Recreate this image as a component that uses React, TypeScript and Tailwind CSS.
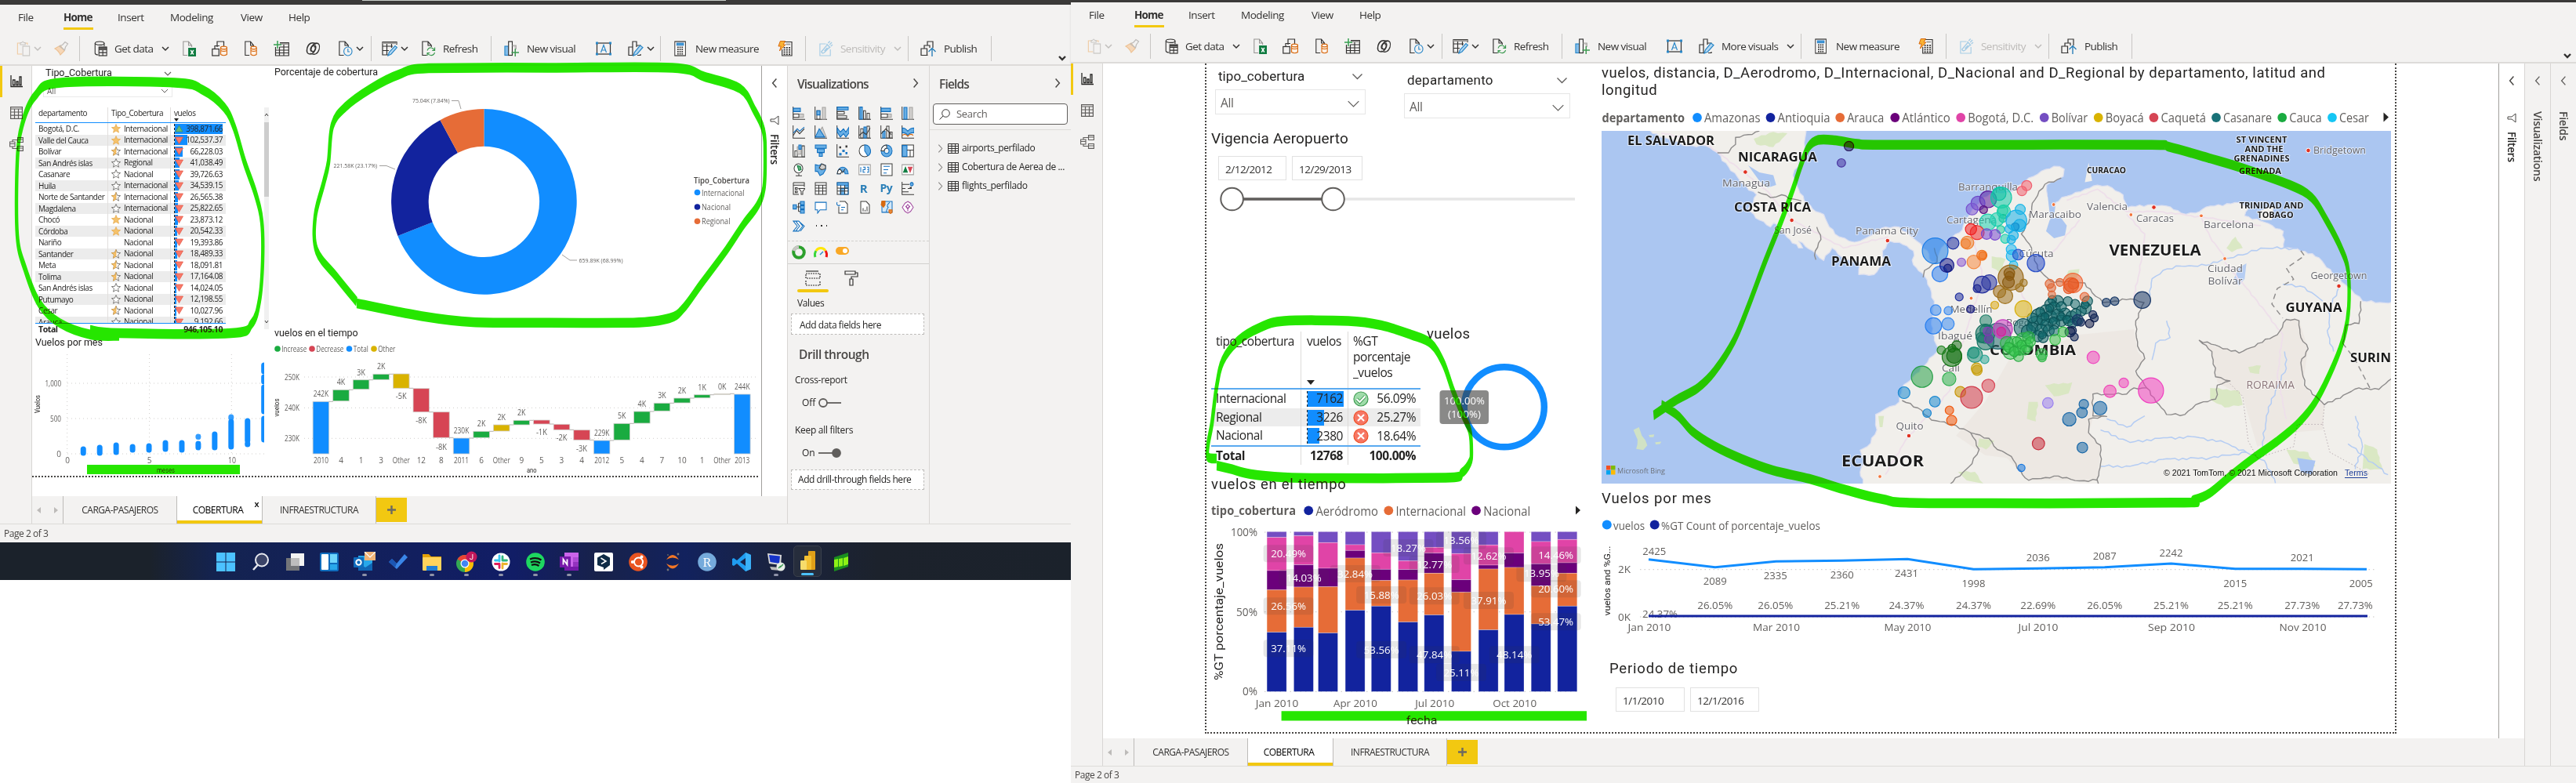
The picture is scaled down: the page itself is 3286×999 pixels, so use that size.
import React from "react";

type Pt = [number, number];
type Kids = { children?: React.ReactNode };

const BLUE = "#118dff";
const NAVY = "#12239e";
const ORANGE = "#e66c37";
const PLUM = "#6b007b";
const PINK = "#e044a7";
const PURPLE = "#744ec2";
const GOLD = "#d9b300";
const RED = "#d64554";
const TEAL = "#197278";
const GREEN = "#1aab40";
const SKY = "#15c6f4";
const SEGOE = "'Open Sans', 'Noto Sans', sans-serif";
const DIN = "Roboto, 'Open Sans', sans-serif";

/* ---------- shared drawing helpers ---------- */

function Tx(p: {
  x: number;
  y: number;
  s: number;
  t: string;
  w?: number;
  a?: "start" | "middle" | "end";
  fill?: string;
  b?: number;
  f?: string;
  r?: boolean;
  halo?: boolean;
}) {
  return (
    <text
      x={p.x}
      y={p.y + p.s * 0.355}
      fontSize={p.s}
      fontFamily={p.f ?? SEGOE}
      fontWeight={p.b ?? 400}
      fill={p.fill ?? "#605e5c"}
      textAnchor={p.a ?? "start"}
      textLength={p.w}
      lengthAdjust="spacingAndGlyphs"
      transform={p.r ? `rotate(-90 ${p.x} ${p.y})` : undefined}
      stroke={p.halo ? "#ffffff" : undefined}
      strokeOpacity={p.halo ? 0.6 : undefined}
      strokeWidth={p.halo ? 2 : undefined}
      paintOrder="stroke"
    >
      {p.t}
    </text>
  );
}

function smooth(points: Pt[], squeeze = 1): string {
  const q = points.map(([x, y]) => [x / squeeze, y] as Pt);
  let d = `M${q[0][0]} ${q[0][1]}`;
  for (let i = 0; i < q.length - 1; i++) {
    const p0 = q[i - 1] ?? q[i];
    const p1 = q[i];
    const p2 = q[i + 1];
    const p3 = q[i + 2] ?? p2;
    d += `C${p1[0] + (p2[0] - p0[0]) / 6} ${p1[1] + (p2[1] - p0[1]) / 6} ${p2[0] - (p3[0] - p1[0]) / 6} ${p2[1] - (p3[1] - p1[1]) / 6} ${p2[0]} ${p2[1]}`;
  }
  return d;
}

function Chev({ dir = "down", c = "#323130", size = 10, sw = 1.5 }: { dir?: "down" | "left" | "right"; c?: string; size?: number; sw?: number }) {
  const d = dir === "down" ? "M1 3L5 7L9 3" : dir === "left" ? "M7 0.5L3 5L7 9.5" : "M3 0.5L7 5L3 9.5";
  return (
    <svg width={size} height={size} viewBox="0 0 10 10" fill="none" stroke={c} strokeWidth={sw} className="shrink-0">
      <path d={d} />
    </svg>
  );
}

/* ---------- ribbon icons ---------- */

function Ic({ children, w = 20, h = 20 }: Kids & { w?: number; h?: number }) {
  return (
    <svg width={w} height={h} viewBox="0 0 20 20" fill="none" stroke="#323130" strokeWidth="1.2" className="block" preserveAspectRatio="none">
      {children}
    </svg>
  );
}
const PasteIcon = () => (
  <Ic w={18}>
    <path d="M6 3H1.5V17H8" stroke="#f0c9a0" />
    <path d="M12 3H15.5V5" stroke="#f0c9a0" />
    <path d="M5.5 5V2.5H7.5Q9 -0.5 10.5 2.5H12.5V5Z" stroke="#c8c6c4" />
    <rect x="9" y="7" width="9.5" height="12" stroke="#c8c6c4" />
  </Ic>
);
const BrushIcon = () => (
  <Ic>
    <path d="M2 10L9 6L14 13L9 18Q7 13 2 10Z" fill="#f6d7b8" stroke="#edc295" />
    <path d="M8 7L12 5L15 1.5L18.5 4L15.5 8L14.5 12Z" stroke="#bebbb8" />
  </Ic>
);
const DbIcon = () => (
  <Ic>
    <ellipse cx="9" cy="3.2" rx="6.5" ry="2.2" />
    <path d="M2.5 3.2V16Q3 18 7 18M15.500 3.2V7" />
    <rect x="8" y="8" width="11" height="11" />
    <path d="M8 11.500H19M8 15.200H19M13.500 11.500V19" />
    <path d="M8 9.500H19" strokeWidth="2" />
  </Ic>
);
const FileShape = ({ c = "#323130" }: { c?: string }) => <path d="M8 18.500H2V1H9.500L14 6V8M9.500 1V6H14" stroke={c} />;
const ExcelIcon = () => (
  <Ic>
    <FileShape c="#979593" />
    <rect x="9" y="9" width="11" height="11" fill="#107c41" stroke="none" />
    <path d="M12.500 12L16.500 17.500M16.500 12L12.500 17.500" stroke="#fff" strokeWidth="1.500" />
  </Ic>
);
const Cylinder = ({ x }: { x: number }) => (
  <g stroke="#d8690f" strokeWidth="1.200">
    <path d={`M${x} 9V17.500Q${x + 4} 20 ${x + 8} 17.500V9`} fill="#fdf1e6" />
    <ellipse cx={x + 4} cy="9" rx="4" ry="1.800" fill="#fdf1e6" />
    <path d={`M${x} 12.500Q${x + 4} 14.500 ${x + 8} 12.500`} />
  </g>
);
const DatasetIcon = () => (
  <Ic>
    <path d="M7 8V1H15.500V7" />
    <rect x="0.800" y="10.500" width="8.500" height="8.500" />
    <path d="M4 10V6.500H10" />
    <Cylinder x={11.500} />
  </Ic>
);
const SqlIcon = () => (
  <Ic>
    <FileShape />
    <Cylinder x={10} />
  </Ic>
);
const EnterIcon = () => (
  <Ic>
    <path d="M8 2.500H19.300V19H2.500V8M2.500 12H19.300M2.500 15.500H19.300M7.500 8V19M13 5V19M7.500 8H19.300" />
    <path d="M8 4H19" stroke="#a19f9d" strokeWidth="2" />
    <path d="M5 0V10M0 5H10" stroke="#37a050" strokeWidth="1.500" />
  </Ic>
);
const DataverseIcon = () => (
  <Ic>
    <path d="M14 4Q5 0 2 9Q0 17 6 17Q10 17 12.500 12Q15 6 11.500 6Q8 6 6.500 10Q6 14 9 13" strokeWidth="1.500" />
    <path d="M6 16Q15 20 18 11Q20 3 14 3Q10 4 8 8Q6 13 9 14Q12 14 13 10Q13 7 11 8" strokeWidth="1.300" />
  </Ic>
);
const RecentIcon = () => (
  <Ic>
    <FileShape />
    <circle cx="13.500" cy="13.500" r="5.500" stroke="#2b88c8" fill="#f3f2f1" />
    <path d="M13.500 10V14H16" stroke="#2b88c8" />
  </Ic>
);
const TransformIcon = () => (
  <Ic>
    <path d="M8 18H1V1.500H19V5M1 7H14M1 12.500H9M6.500 4V18M12.500 4V9" />
    <path d="M1 3H19" stroke="#a19f9d" strokeWidth="2.200" />
    <path d="M8 19L9.500 14.500L17 6.500L19.500 8.500L12 17Z" fill="#b5d9f3" stroke="#2b88c8" />
  </Ic>
);
const RefreshIcon = () => (
  <Ic>
    <FileShape />
    <path d="M8.500 12.500Q10 8.500 14 9Q17 9.500 18 12M18.500 8.500V12.300H15M18.500 15Q17 19 13 18.500Q10 18 9 16M8.500 19V15.500H12" stroke="#3c9a50" />
  </Ic>
);
const VisualIcon = () => (
  <Ic>
    <rect x="1" y="7" width="5" height="11.500" fill="#83beec" stroke="#2b88c8" />
    <rect x="6" y="1" width="5" height="17.500" fill="#fafafa" />
    <path d="M11 6H16V11" stroke="#a19f9d" fill="#d2d0ce" />
    <path d="M15 10V20M10 15H20" stroke="#3c9a50" strokeWidth="1.500" />
  </Ic>
);
const TextBoxIcon = () => (
  <Ic>
    <rect x="1.500" y="3" width="17" height="14" />
    <path d="M6.500 15L10 5.500L13.500 15M7.800 12H12.200" stroke="#2b88c8" />
    <path d="M0 1.500H3V4.500H0ZM17 1.500H20V4.500H17ZM0 15.500H3V18.500H0ZM17 15.500H20V18.500H17Z" fill="#2b88c8" stroke="none" />
  </Ic>
);
const MoreVisIcon = () => (
  <Ic>
    <path d="M7 18.500H1V8H6M6 18V1H11V8M11 6H16V8M16 17V18.500H12" />
    <path d="M7 19L8.500 14.500L15.500 6L19 8.500L11.500 17Z" fill="#b5d9f3" stroke="#2b88c8" />
  </Ic>
);
const Keys = ({ x, y }: { x: number; y: number }) => (
  <g fill="#323130" stroke="none">
    {[0, 1, 2, 3].map((r) => [0, 1, 2].map((c) => <rect key={`${r}${c}`} x={x + c * 3.400} y={y + r * 2.800} width="2.100" height="1.700" />))}
  </g>
);
const CalcIcon = () => (
  <Ic w={16}>
    <rect x="1" y="1" width="17" height="18" fill="#faf9f8" />
    <rect x="4" y="3" width="11" height="2.800" fill="#4aa0dc" stroke="#106ebe" strokeWidth="0.800" />
    <Keys x={5} y={7.500} />
  </Ic>
);
const QuickIcon = () => (
  <Ic>
    <path d="M9 1.500H19V19H6V11" fill="#faf9f8" />
    <rect x="11" y="3.500" width="6" height="2" fill="#a19f9d" stroke="none" />
    <Keys x={8} y={8} />
    <path d="M3.500 0.500H10L7.500 5H10.500L2.500 13L4.500 7H1Z" fill="#f9b233" stroke="#d8690f" strokeWidth="1" />
  </Ic>
);
const SensIcon = () => (
  <Ic>
    <path d="M10 4H2V19H16V11" stroke="#a6cde6" />
    <path d="M4 14L12 5L15 8L8 15Q5 17 4 14ZM8 13L12 9M11 4L16 9M13 3L15.500 0.500M15 5L18 2M16.500 7L19 5" stroke="#a6cde6" strokeWidth="1.500" />
  </Ic>
);
const PublishIcon = () => (
  <Ic>
    <path d="M5 10V6H12V9M9 6V1H16V9M9.500 18.500H1V10H8.500V18.500" />
    <path d="M15 20V9.500M10.500 14L15 9.500L19.500 14" stroke="#2b7fb8" strokeWidth="1.400" />
  </Ic>
);

function Sep({ m }: { m: string }) {
  return <div className={`h-8 w-px shrink-0 bg-[#c8c6c4] ${m}`} />;
}
function Lbl({ cls, children }: Kids & { cls: string }) {
  return <div className={`shrink-0 whitespace-nowrap text-[13.500px] tracking-[-0.550px] ${cls}`}>{children}</div>;
}
function Slot({ cls, children }: Kids & { cls: string }) {
  return <div className={`flex shrink-0 items-center ${cls}`}>{children}</div>;
}

function Ribbon({ wide }: { wide?: boolean }) {
  return (
    <header className="h-[78px] shrink-0 border-b-2 border-[#dddbd9] bg-[#f3f2f1] text-[#323130] shadow-sm">
      <nav className="flex h-8 items-center whitespace-nowrap text-[13.500px] tracking-[-0.450px]">
        <span className="ml-[23px] w-[58px]">File</span>
        <span className="flex h-8 w-[38px] items-center border-b-[3px] border-[#f2c811] pt-[3px] font-bold tracking-[-0.800px]">Home</span>
        <span className="ml-[31px] w-[67px]">Insert</span>
        <span className="w-[90px]">Modeling</span>
        <span className="w-[61px]">View</span>
        <span>Help</span>
      </nav>
      <div className="flex h-[46px] items-center pt-0.5">
        <Slot cls="ml-[21px] w-[18px]"><PasteIcon /></Slot>
        <Slot cls="ml-1 w-2.5"><Chev c="#c0bebc" /></Slot>
        <Slot cls="ml-[15px] w-5"><BrushIcon /></Slot>
        <Sep m="ml-[13px]" />
        <Slot cls="ml-[17px] w-[18px]"><DbIcon /></Slot>
        <Lbl cls="ml-[9px] w-[54px]">Get data</Lbl>
        <Slot cls="ml-1.5 w-2.5"><Chev /></Slot>
        <Slot cls="ml-4 w-[18px]"><ExcelIcon /></Slot>
        <Slot cls="ml-5 w-5"><DatasetIcon /></Slot>
        <Slot cls="ml-[21px] w-[18px]"><SqlIcon /></Slot>
        <Slot cls="ml-5 w-5"><EnterIcon /></Slot>
        <Slot cls="ml-[21px] w-[19px]"><DataverseIcon /></Slot>
        <Slot cls="ml-[22px] w-[19px]"><RecentIcon /></Slot>
        <Slot cls="ml-1 w-2.5"><Chev /></Slot>
        <Sep m="ml-[9px]" />
        <Slot cls="ml-[13px] w-5"><TransformIcon /></Slot>
        <Slot cls="ml-1 w-2.5"><Chev /></Slot>
        <Slot cls="ml-4 w-[19px]"><RefreshIcon /></Slot>
        <Lbl cls="ml-[9px] w-[46px]">Refresh</Lbl>
        <Sep m="ml-[15px]" />
        <Slot cls="ml-4 w-[19px]"><VisualIcon /></Slot>
        <Lbl cls="ml-2.5 w-[66px]">New visual</Lbl>
        <Slot cls="ml-[22px] w-5"><TextBoxIcon /></Slot>
        <Slot cls="ml-[21px] w-5"><MoreVisIcon /></Slot>
        {wide ? (
          <>
            <Lbl cls="ml-[9px] w-[78px]">More visuals</Lbl>
            <Slot cls="ml-[5px] w-2.5"><Chev /></Slot>
            <Sep m="ml-2" />
          </>
        ) : (
          <>
            <Slot cls="ml-1 w-2.5"><Chev /></Slot>
            <Sep m="ml-[7px]" />
          </>
        )}
        <Slot cls="ml-[17px] w-4"><CalcIcon /></Slot>
        <Lbl cls="ml-[11px] w-[84px]">New measure</Lbl>
        <Slot cls="ml-[21px] w-[19px]"><QuickIcon /></Slot>
        <Sep m="ml-4" />
        <Slot cls="ml-4 w-[19px]"><SensIcon /></Slot>
        <Lbl cls="ml-[9px] w-[62px] text-[#bdbbb9]">Sensitivity</Lbl>
        <Slot cls="ml-1.5 w-2.5"><Chev c="#bdbbb9" /></Slot>
        <Sep m="ml-2" />
        <Slot cls="ml-[15px] w-5"><PublishIcon /></Slot>
        <Lbl cls="ml-2.5 w-[45px]">Publish</Lbl>
        <Sep m="ml-[15px]" />
        <div className="mr-1.5 ml-auto mt-6"><Chev sw={2.400} /></div>
      </div>
    </header>
  );
}

function NavRail() {
  return (
    <aside className="flex w-[41px] shrink-0 flex-col border-r border-[#d8d6d4] bg-[#f3f2f1]">
      <div className="flex h-10 items-center border-l-[3px] border-[#f2c811] pl-[10px]">
        <svg width="16" height="16" viewBox="0 0 16 16" fill="none" stroke="#252423" strokeWidth="1.3"><path d="M1 0V14.500H16M3.500 12.500V6H6V12.500ZM8 12.500V8H10V12.500ZM12 12.500V2H14V12.500Z" /></svg>
      </div>
      <div className="flex h-10 items-center pl-[13px]">
        <svg width="16" height="16" viewBox="0 0 16 16" fill="none" stroke="#605e5c" strokeWidth="1.2"><path d="M0.600 0.600H15.400V15.400H0.600ZM0.600 3H15.400M0.600 7H15.400M0.600 11.200H15.400M5.500 3V15M10.500 3V15" /></svg>
      </div>
      <div className="flex h-10 items-center pl-[12px]">
        <svg width="18" height="18" viewBox="0 0 18 18" fill="none" stroke="#605e5c" strokeWidth="1.1"><path d="M10.500 0.600H17.400V6.500H10.500ZM10.500 3H17.400M0.600 6H7V12H0.600ZM0.600 8.500H7M10.500 11.500H17.400V17.400H10.500ZM10.500 14H17.400M4 6V3.500H10.500M4 12V14.500H10.500" /></svg>
      </div>
    </aside>
  );
}

function PageTabs({ close }: { close?: boolean }) {
  return (
    <div className="flex h-[35px] shrink-0 items-stretch bg-[#f3f2f1] text-[12px] tracking-[-0.500px] text-[#323130]">
      <div className="flex w-[39px] items-center justify-between pr-1.5 pl-1.5">
        <svg width="5" height="8" viewBox="0 0 5 8"><path d="M5 0V8L0 4Z" fill="#bdbbb9" /></svg>
        <svg width="5" height="8" viewBox="0 0 5 8"><path d="M0 0V8L5 4Z" fill="#bdbbb9" /></svg>
      </div>
      <div className="flex w-[146px] items-center justify-center border-x border-[#bdbbb9]">CARGA-PASAJEROS</div>
      <div className="relative flex w-[108px] items-center justify-center border-b-4 border-[#f2c811] bg-white pt-1 pr-1 text-black">
        COBERTURA
        {close && <span className="absolute top-0.5 right-[4px] text-[11px] font-semibold">x</span>}
      </div>
      <div className="flex w-[146px] items-center justify-center border-x border-[#bdbbb9]">INFRAESTRUCTURA</div>
      <div className="my-0.5 flex w-[39px] items-center justify-center bg-[#f2c811]">
        <svg width="11" height="11" viewBox="0 0 11 11"><path d="M5.500 0V11M0 5.500H11" stroke="#6d6a60" strokeWidth="2.4" /></svg>
      </div>
    </div>
  );
}

function StatusBar({ h }: { h: string }) {
  return <footer className={`flex shrink-0 items-center border-t border-[#dddbd9] bg-[#f3f2f1] pl-[5px] text-[12px] tracking-[-0.450px] text-[#484644] ${h}`}>Page 2 of 3</footer>;
}

/* ---------- left report ---------- */

const STAR = "M6 0.500L7.600 4.300L11.600 4.600L8.500 7.200L9.500 11.200L6 9L2.500 11.200L3.500 7.200L0.400 4.600L4.400 4.300Z";
function Star({ k }: { k: number }) {
  if (k < 0) return <svg width="12" height="12" />;
  return (
    <svg width="12" height="12" viewBox="0 0 12 12">
      {k === 2 && <path d={STAR} fill="#f5c26b" stroke="#e5a848" strokeWidth="0.7" />}
      {k < 2 && <path d={STAR} fill="#fff" stroke="#605e5c" strokeWidth="0.8" />}
      {k === 1 && <path d="M6 0.500V9L2.500 11.200L3.500 7.200L0.400 4.600L4.400 4.300Z" fill="#f5c26b" stroke="#e5a848" strokeWidth="0.7" />}
    </svg>
  );
}

const ROWS: [string, number, string, string][] = [
  ["Bogotá, D.C.", 2, "Internacional", "398,871.66"],
  ["Valle del Cauca", 2, "Internacional", "102,537.37"],
  ["Bolívar", 1, "Internacional", "66,228.03"],
  ["San Andrés islas", 0, "Regional", "41,038.49"],
  ["Casanare", 0, "Nacional", "39,726.63"],
  ["Huila", 0, "Internacional", "34,539.15"],
  ["Norte de Santander", 1, "Internacional", "26,565.38"],
  ["Magdalena", 0, "Internacional", "25,822.65"],
  ["Chocó", 2, "Nacional", "23,873.12"],
  ["Córdoba", 2, "Nacional", "20,542.33"],
  ["Nariño", -1, "Nacional", "19,393.86"],
  ["Santander", 1, "Nacional", "18,489.33"],
  ["Meta", 1, "Nacional", "18,091.81"],
  ["Tolima", 1, "Nacional", "17,164.08"],
  ["San Andrés islas", 0, "Nacional", "14,024.05"],
  ["Putumayo", 0, "Nacional", "12,198.55"],
  ["Cesar", 1, "Nacional", "10,027.96"],
  ["Arauca", 0, "Nacional", "9,192.66"],
];
const TOP_VALUE = 398871.66;

function DeptTable() {
  return (
    <div className="mt-[13px] flex h-[286px] shrink-0 justify-between">
      <div className="w-[243px] text-[10px] tracking-[-0.420px] text-[#252423]">
        <div className="flex h-5 border-b border-[#118dff]">
          <span className="w-[93px] border-r border-[#e1dfdd] pl-1">departamento</span>
          <span className="w-[80px] border-r border-[#e1dfdd] pl-1">Tipo_Cobertura</span>
          <span className="flex flex-col pl-1 leading-[14px]">
            vuelos
            <svg width="6" height="4" viewBox="0 0 6 4"><path d="M0 0H6L3 4Z" fill="#252423" /></svg>
          </span>
        </div>
        <div className="h-[255px] overflow-hidden">
          {ROWS.map((r, i) => (
            <div key={i} className={`flex h-[14.500px] items-center ${i % 2 ? "bg-[#ececec]" : "bg-white"}`}>
              <span className="h-full w-[93px] whitespace-nowrap border-r border-[#e1dfdd] pl-1 leading-[15px]">{r[0]}</span>
              <span className="flex h-full w-[80px] items-center gap-1 border-r border-[#e1dfdd] pl-1 leading-[15px]">
                <Star k={r[1]} />
                {r[2]}
              </span>
              <span className="relative ml-1 flex h-[13px] w-[62px] items-center border-l border-dashed border-[#252423]">
                <span className="absolute inset-y-0 left-0 bg-[#118dff]" style={{ width: Math.max(2, (parseFloat(r[3].replace(",", "")) / TOP_VALUE) * 61) }} />
                <svg width="11" height="10" viewBox="0 0 11 10" className="relative">
                  {i === 0 ? <path d="M5.500 1L10 9H1Z" fill="#6db873" stroke="#3f8f4c" strokeWidth="0.6" /> : <path d="M0.500 1H10.500L5.500 9.500Z" fill="#f9796a" stroke="#e2543f" strokeWidth="0.7" />}
                </svg>
                <span className="relative ml-auto">{r[3]}</span>
              </span>
            </div>
          ))}
        </div>
        <div className="flex h-[17px] items-center justify-between border-t border-[#118dff] pr-1 pl-1 text-[10.500px] font-bold">
          <span>Total</span>
          <span>946,105.10</span>
        </div>
      </div>
      <div className="flex h-[283px] w-1.5 flex-col items-center bg-[#f0f0f0]">
        <div className="flex h-[19px] items-center"><svg width="6" height="5" viewBox="0 0 6 5" fill="none" stroke="#484644"><path d="M1 4L3 1L5 4" /></svg></div>
        <div className="h-[95px] w-full bg-[#cdcdcd]" />
        <div className="flex-1" />
        <div className="flex h-[19px] items-center"><svg width="6" height="5" viewBox="0 0 6 5" fill="none" stroke="#484644"><path d="M1 1L3 4L5 1" /></svg></div>
      </div>
    </div>
  );
}

const SCATTER: [number, number, number][] = [
  [1, 573, 578], [2, 571, 578], [3, 568, 577], [4, 570, 574], [5, 569, 574], [6, 565, 573], [7, 565, 574],
  [8, 557, 557.5], [8, 566, 571], [9, 554, 571], [10, 532, 533], [10, 538, 570], [11, 537, 562], [11, 566, 567],
  [12, 466, 474], [12, 481, 487], [12, 494, 525], [12, 534, 561],
];

function Scatter() {
  return (
    <svg width="296" height="161" viewBox="41 446 296 161" className="shrink-0">
      {[489, 534, 579].map((y) => <path key={y} d={`M86 ${y}H337`} stroke="#d0cecc" strokeDasharray="1 4" />)}
      {[85.7, 190.6, 295.3].map((x) => <path key={x} d={`M${x} 452V579`} stroke="#d0cecc" strokeDasharray="1 4" />)}
      <g stroke={BLUE} strokeWidth="7" strokeLinecap="round">
        {SCATTER.map(([n, a, b], i) => <path key={i} d={`M${85.3 + n * 20.95} ${a}V${b}`} opacity={a === 557 || a === 532 ? 0.85 : 1} />)}
      </g>
      <Tx x={78} y={489} s={10} t="1,000" a="end" w={20.500} />
      <Tx x={78} y={534} s={10} t="500" a="end" w={14} />
      <Tx x={78} y={579} s={10} t="0" a="end" />
      <Tx x={86} y={587} s={10} t="0" a="middle" />
      <Tx x={190.600} y={587} s={10} t="5" a="middle" />
      <Tx x={296} y={587} s={10} t="10" a="middle" w={10} />
      <Tx x={48} y={515.500} s={9} t="Vuelos" a="middle" w={23} r fill="#252423" f={DIN} />
      <Tx x={200} y={599.500} s={8.500} t="meses" w={23} fill="#252423" f={DIN} />
    </svg>
  );
}

function arc(cx: number, cy: number, R: number, r: number, a: number, b: number) {
  const p = (rad: number, t: number) => `${cx + rad * Math.sin(t * 2 * Math.PI)} ${cy - rad * Math.cos(t * 2 * Math.PI)}`;
  const big = b - a > 0.5 ? 1 : 0;
  return `M${p(R, a)}A${R} ${R} 0 ${big} 1 ${p(R, b)}L${p(r, b)}A${r} ${r} 0 ${big} 0 ${p(r, a)}Z`;
}

function DonutChart() {
  return (
    <svg width="617" height="317" viewBox="350 101 617 317" className="shrink-0">
      <path d={arc(617.4, 257.4, 118.3, 70.7, 0, 0.6899)} fill={BLUE} />
      <path d={arc(617.4, 257.4, 118.3, 70.7, 0.6899, 0.9216)} fill={NAVY} />
      <path d={arc(617.4, 257.4, 118.3, 70.7, 0.9216, 1)} fill={ORANGE} />
      <path d="M576 128.500H585L588 139M484 211.500H493L504 216M717 325L727 332H736" fill="none" stroke="#a19f9d" />
      <Tx x={526} y={128.500} s={8} t="75.04K (7.84%)" w={47.500} />
      <Tx x={425.500} y={211.500} s={8} t="221.58K (23.17%)" w={55.500} />
      <Tx x={738.500} y={332} s={8} t="659.89K (68.99%)" w={56} />
      <Tx x={885} y={230.500} s={10.500} t="Tipo_Cobertura" w={71} b={600} fill="#484644" />
      {([["Internacional", BLUE, 246, 54.5], ["Nacional", NAVY, 264.5, 37], ["Regional", ORANGE, 282.7, 36.5]] as [string, string, number, number][]).map(([t, c, y, w]) => (
        <g key={t}>
          <circle cx="889.500" cy={y - 0.500} r="3.800" fill={c} />
          <Tx x={895} y={y} s={10} t={t} w={w} />
        </g>
      ))}
    </svg>
  );
}

const FALL: [string, string, number, number, string, number][] = [
  ["2010", BLUE, 512.3, 579, "242K", 502.7],
  ["4", GREEN, 497.3, 511.7, "4K", 487.7],
  ["1", GREEN, 484.7, 496.7, "3K", 475.3],
  ["3", GREEN, 477.3, 484.3, "2K", 467.3],
  ["Other", GOLD, 477, 495.3, "-5K", 505.7],
  ["12", RED, 495.7, 525.7, "-8K", 536.7],
  ["8", RED, 525.7, 558.3, "-8K", 570],
  ["2011", BLUE, 559, 579, "230K", 549.3],
  ["6", GREEN, 550.3, 558.3, "2K", 540.3],
  ["Other", GOLD, 542, 550, "2K", 532.3],
  ["9", GREEN, 536.3, 542, "2K", 526.7],
  ["5", RED, 536, 541, "-1K", 551.7],
  ["3", RED, 541.3, 548.3, "-2K", 558.3],
  ["4", RED, 548.7, 561.3, "-3K", 572.7],
  ["2012", BLUE, 562, 579, "229K", 552.7],
  ["5", GREEN, 540.3, 561.3, "5K", 530.7],
  ["4", GREEN, 525, 540, "4K", 515.7],
  ["7", GREEN, 514.3, 524.3, "3K", 504.7],
  ["10", GREEN, 508, 514, "2K", 498.7],
  ["1", GREEN, 503.7, 507.7, "1K", 494.3],
  ["Other", "#d8cfae", 502.3, 503.5, "0K", 493.3],
  ["2013", BLUE, 503, 579, "244K", 493.3],
];

function Waterfall() {
  return (
    <svg width="617" height="173" viewBox="350 434 617 173" className="shrink-0">
      {([["Increase", GREEN, 354, 32], ["Decrease", RED, 398, 35], ["Total", BLUE, 445.5, 19], ["Other", GOLD, 477, 22]] as [string, string, number, number][]).map(([t, c, x, w]) => (
        <g key={t}>
          <circle cx={x} cy="445" r="3.800" fill={c} />
          <Tx x={x + 5.300} y={445} s={10} t={t} w={w} />
        </g>
      ))}
      {[[481, "250K"], [520.3, "240K"], [559.3, "230K"]].map(([y, t]) => (
        <g key={t}>
          <path d={`M388 ${y}H965`} stroke="#d0cecc" strokeDasharray="1 4" />
          <Tx x={363} y={Number(y)} s={10} t={String(t)} w={19} />
        </g>
      ))}
      {FALL.map(([n, c, a, b, l, ly], i) => {
        const x = 409.4 + i * 25.59;
        return (
          <g key={i}>
            <rect x={x - 10.300} y={a} width="20.600" height={b - a} fill={c} stroke="#d2d0ce" strokeWidth="0.800" />
            {i < 21 && <path d={`M${x + 10} ${c === RED || l === "-5K" ? b : a}h5.500`} stroke="#b3b0ad" />}
            <Tx x={x} y={ly} s={10} t={l} a="middle" w={l.length === 4 ? 19.500 : l.length === 3 ? 14 : 10.500} />
            <Tx x={x} y={587.500} s={10} t={n} a="middle" w={n === "Other" ? 22 : n.length === 4 ? 19 : undefined} />
          </g>
        );
      })}
      <Tx x={353} y={520} s={9} t="vuelos" a="middle" w={23} r fill="#252423" f={DIN} />
      <Tx x={672} y={599.500} s={8.500} t="ano" w={12.500} fill="#252423" f={DIN} />
    </svg>
  );
}

const SmallTitle = ({ cls, children }: Kids & { cls: string }) => <h3 className={`shrink-0 whitespace-nowrap font-[Roboto] text-[12.500px] tracking-[-0.050px] text-[#252423] ${cls}`}>{children}</h3>;

function LeftReport() {
  return (
    <main className="flex min-w-0 flex-1 flex-col bg-white">
      <div className="flex h-[525px] w-[926px] justify-between border-b-2 border-dotted border-[#484644]">
        <section className="flex w-[302px] flex-col">
          <div className="ml-[14px] w-[165px] shrink-0">
            <div className="flex h-[19px] items-center justify-between pr-px pl-[3px]">
              <SmallTitle cls="">Tipo_Cobertura</SmallTitle>
              <Chev c="#605e5c" sw={1.100} />
            </div>
            <div className="mt-px flex h-5 items-center justify-between border border-[#eaeaea] pt-1 pr-1 pl-1 text-[10px] text-[#605e5c]">
              All
              <Chev c="#605e5c" sw={1} />
            </div>
          </div>
          <div className="ml-1 w-[298px] shrink-0"><DeptTable /></div>
          <SmallTitle cls="ml-1 mt-1.5 h-[17px] w-[90px] leading-[16px]">Vuelos por mes</SmallTitle>
          <Scatter />
        </section>
        <section className="flex w-[617px] flex-col">
          <SmallTitle cls="h-[17px] leading-[16px]">Porcentaje de cobertura</SmallTitle>
          <DonutChart />
          <SmallTitle cls="h-4 leading-[14px]">vuelos en el tiempo</SmallTitle>
          <Waterfall />
        </section>
      </div>
    </main>
  );
}

/* ---------- side panes ---------- */

const D = "#3b3a39";
const G = "#a19f9d";
const LB = "#69afe5";
const DB = "#106ebe";
type Shape = [string, string, string];
const AX: Shape = ["M0.700 0V15.300H16", D, "none"];
const VIZ: Shape[][] = [
  [AX, ["M1 2H10V6H1Z", DB, LB], ["M1 9H14V13H1Z", G, "#d2d0ce"], ["M1 9H8V13H1Z", D, "#fff"]],
  [AX, ["M3 5H7V15H3Z", D, "#fff"], ["M3 5H7V10H3Z", DB, LB], ["M10 1H14V15H10Z", G, "#d2d0ce"]],
  [AX, ["M1 0.600H15V4H1Z", DB, LB], ["M1 6H10V9H1ZM1 11H13V14H1Z", D, "#fff"]],
  [AX, ["M2 0.600H5V15H2Z", DB, LB], ["M6.500 5H9V15H6.500ZM11 8H14V15H11Z", D, "#fff"]],
  [AX, ["M1 2H13V6H1Z", DB, LB], ["M1 9H14V13H1Z", G, "#d2d0ce"], ["M1 9H9V13H1Z", D, "#fff"]],
  [AX, ["M3 1H7V15H3Z", DB, LB], ["M10 1H14V15H10Z", G, "#d2d0ce"]],
  [AX, ["M1 12L5 6L9 10L15 4", D, "none"], ["M1 9L6 4L9 7L15 2", DB, "none"]],
  [AX, ["M1 14L10 2L15 14Z", G, "#d2d0ce"], ["M1 14L6 4L13 14Z", DB, LB]],
  [AX, ["M1 3L5 8L9 4L12 8L16 2V9L12 14L9 10L5 14L1 8Z", DB, LB]],
  [AX, ["M3 4H6V15H3ZM11 1H14V15H11Z", D, "#fff"], ["M7 2H10V15H7Z", DB, LB], ["M1 12L6 8L10 11L15 3", D, "none"]],
  [AX, ["M3 7H6V15H3Z", DB, LB], ["M8 1H11V15H8ZM12 8H15V15H12Z", D, "#fff"], ["M1 10L7 4L14 11", D, "none"]],
  [AX, ["M1 3Q5 3 8 7Q11 3 16 3V9Q11 8 8 12Q5 8 1 9Z", DB, LB], ["M1 12Q5 9 8 13Q11 9 15 12", "#d8690f", "none"]],
  [AX, ["M3 8H6V15H3ZM12 2H15V15H12Z", D, "#fff"], ["M6 3H11V12H6Z", G, "#d2d0ce"], ["M8 1H11V6H8Z", DB, LB]],
  [["M1 1H15V5H1Z", DB, LB], ["M3.500 5.500H12.500V10H3.500Z", DB, LB], ["M6 10.500H10V14.500H6Z", DB, LB]],
  [AX, ["M4 3H5.500V4.500H4ZM12 2H13.500V3.500H12Z", D, D], ["M8 7H10V9H8ZM4 11H6V13H4ZM12 10H13.500V11.500H12Z", DB, LB]],
  [["M8 1A7 7 0 1 0 15 8A7 7 0 0 0 8 1Z", D, "#fff"], ["M8 1V8L12 14A7 7 0 0 0 8 1Z", DB, LB]],
  [["M8 1A7 7 0 1 0 15 8A7 7 0 0 0 8 1ZM8 5A3 3 0 1 1 5 8A3 3 0 0 1 8 5Z", DB, LB], ["M8 1V5A3 3 0 0 0 5 8H1A7 7 0 0 1 8 1Z", D, "#fff"]],
  [["M0.700 1H15.300V15H0.700Z", D, "#fff"], ["M1 1.500H7V14.500H1Z", DB, LB], ["M7 7H15M11 7V15", D, "none"]],
  [["M8 1A5.500 5.500 0 1 0 13 7A5.500 5.500 0 0 0 8 1ZM8 13V15M4 15.300H12", D, "#fff"], ["M6 3L10 4L11 8L8 9Z", "#107c41", "#60b37a"]],
  [["M1 2L6 3L9 1L14 3V8L11 13L7 15L4 10H1Z", DB, LB], ["M9 1L14 3V7L9 8L6 6Z", D, "#d2d0ce"]],
  [["M1 13A7 8 0 0 1 15 13H11A3 3 0 0 0 5 13Z", DB, LB], ["M1 13A7 8 0 0 1 4 7L7 10L5 13Z", D, "#fff"], ["M7.500 12L11 7", D, "none"]],
  [["M0.700 2H15.300V14H0.700Z", G, "#fff"], ["M3 5V11M6 5H8.500V8H6V11H8.500M11 5H13V8H11.500M13 8V11H11", DB, "none"]],
  [["M1 1H15V15H1Z", D, "#fff"], ["M4 4H12M4 8H10M4 12H8", DB, "none"]],
  [["M0.700 2H15.300V14H0.700Z", G, "#fff"], ["M5 5L7.500 11H2.500Z", "#107c41", "#107c41"], ["M8.500 5H13.500L11 11Z", RED, RED]],
  [["M1 1H15V6M1 1V15H8M1 4H15M3.500 7H6V9H3.500ZM3.500 11H6V13H3.500Z", D, "none"], ["M8 8H16L13 11.500V15H11V11.500Z", D, "#fff"]],
  [["M1 1H15V15H1ZM1 4H15M1 7.500H15M1 11H15M5.500 4V15M10.500 4V15", D, "#fff"]],
  [["M1 1H15V15H1Z", D, "#fff"], ["M1 1H15V4H1ZM10.500 4H15V15H10.500ZM5 8H15V15H5Z", DB, LB], ["M1 7.500H15M1 11H15M5.500 4V15M10.500 4V15", D, "none"]],
  [],
  [],
  [AX, ["M1 3H10M1 8H5M8 8H11M1 12H9", D, "none"], ["M13 0.800A2 2 0 1 0 13.100 0.800Z", DB, LB], ["M11 6.500H12.500V8H11Z", D, D]],
  [["M0.700 5H5V10H0.700ZM10 1H15V5H10ZM10 6H15V10H10ZM10 11H15V15H10Z", DB, LB], ["M5 7.500H10M7.500 3V13M7.500 3H10M7.500 13H10", D, "none"]],
  [["M1 2H15V11H7L4 15V11H1Z", DB, "#fff"]],
  [["M4 1H11L14 4V15H3V7", D, "#fff"], ["M6 8H11M6 11H9M1 2A2 2 0 1 0 5 5", DB, "none"]],
  [["M3 1H10L14 5V15H3Z", D, "#fff"], ["M6 13V9M8.500 13V11M11 13V7", D, "none"]],
  [["M2 1H15V14H2Z", DB, "#d3e8f8"], ["M12 2Q7 6 10 8Q7 12 8 14", DB, "none"], ["M2 0.500H6V5L4 8L1 5Z", "#d8690f", "#d8690f"], ["M11 11H15V14L13 15.500L11 14Z", "#d8690f", "#e78a3c"]],
  [["M8 1L11.500 3L15 8L11.500 13L8 15L4.500 13L1 8L4.500 3ZM8 4.500L10 7L8 9.500L6 7ZM5 6.500L8 10L11 6.500M8 10V13", "#a0489e", "#fff"]],
  [["M1 2H8L13 8L8 14H1L6 8ZM9 3L15 8L10 14M4 2L9 8L4 14", DB, "#fff"]],
];

function VizIcon({ i }: { i: number }) {
  if (i === 27) return <span className="w-5 pl-0.5 font-['Open_Sans'] text-[15px] leading-4 font-bold text-[#2b7fb8]">R</span>;
  if (i === 28) return <span className="w-5 text-[14px] leading-4 font-bold tracking-[-0.500px] text-[#2b7fb8]">Py</span>;
  return (
    <svg width="16" height="17" viewBox="0 0 16 16" strokeWidth="1" preserveAspectRatio="none">
      {VIZ[i].map(([d, s, f], k) => <path key={k} d={d} stroke={s} fill={f} fillRule="evenodd" />)}
    </svg>
  );
}

const Funnel = () => (
  <svg width="12" height="13" viewBox="0 0 12 13" fill="none" stroke="#484644"><path d="M11 1V12L6 8H1V5H6Z" /></svg>
);

function Pane({ title, children }: Kids & { title: string }) {
  return (
    <aside className="flex w-[181px] shrink-0 flex-col border-l border-[#d8d6d4] bg-[#f3f2f1] text-[#252423]">
      <div className="flex h-12 shrink-0 items-center justify-between pr-[11px] pl-3">
        <h2 className="text-[15.500px] font-semibold tracking-[-0.850px] text-[#484644]">{title}</h2>
        <div className="-mt-1"><Chev dir="right" c="#484644" size={12} sw={1.200} /></div>
      </div>
      {children}
    </aside>
  );
}

function Toggle({ on }: { on?: boolean }) {
  return (
    <svg width="30" height="12" viewBox="0 0 30 12" fill="none" stroke="#605e5c" strokeWidth="1.8">
      {on ? <path d="M0 6H20" /> : <path d="M11 6H29" />}
      {on ? <circle cx="23" cy="6" r="5" fill="#605e5c" /> : <circle cx="6" cy="6" r="5" />}
    </svg>
  );
}

function VizPane() {
  return (
    <Pane title="Visualizations">
      <div className="grid grid-cols-[repeat(6,27.900px)] gap-0 pl-1.5">
        {VIZ.map((_, i) => <div key={i} className="flex h-6 items-center"><VizIcon i={i} /></div>)}
        <div className="flex h-6 items-center gap-[5px] pl-0.5">
          {[0, 1, 2].map((i) => <span key={i} className="size-[1.500px] bg-[#323130]" />)}
        </div>
      </div>
      <div className="mt-[7px] flex h-[30px] items-center gap-2.5 border-t border-b border-t-[#d2d0ce] border-b-[#d2d0ce] pl-[5px] [border-top-style:dashed]">
        <svg width="18" height="18" viewBox="0 0 18 18" fill="none" strokeWidth="4"><circle cx="9" cy="9" r="6.800" stroke="#2ca02c" /><path d="M2.500 7A7 7 0 0 1 9 2.200" stroke="#c8c6c4" /></svg>
        <svg width="18" height="16" viewBox="0 0 18 16" fill="none" strokeWidth="3"><path d="M2 14A7 8 0 0 1 3 6" stroke="#3bd63b" /><path d="M3 6A7 7 0 0 1 15 6" stroke="#ffe600" /><path d="M15 6A7 8 0 0 1 16 14" stroke="#f01616" /><path d="M8 11L12 7" stroke="#2b88c8" strokeWidth="1.5" /></svg>
        <div className="-mt-1 flex h-2.5 w-[17px] items-center justify-end rounded-full bg-[#f9a825] px-0.5"><span className="size-1.5 rounded-full bg-white" /></div>
      </div>
      <div className="mt-2 flex gap-[30px] pl-[22px]">
        <svg width="20" height="20" viewBox="0 0 20 20" fill="none" stroke="#323130" strokeWidth="1.2"><path d="M1 1H17" /><path d="M1 4H19V10H1ZM1 13V19H19V13" strokeDasharray="2 1" /></svg>
        <svg width="18" height="20" viewBox="0 0 18 20" fill="none" stroke="#323130" strokeWidth="1.2"><path d="M1 1H14V5H1ZM14 3H17V8H9V11M7 11H11V19H7Z" /></svg>
      </div>
      <div className="mt-[4px] ml-3 h-1 w-10 shrink-0 rounded-sm bg-[#f2c811]" />
      <p className="mt-[5px] h-[18px] pl-3 text-[12px] tracking-[-0.400px]">Values</p>
      <div className="mt-1 ml-1 flex h-[27px] w-[170px] shrink-0 items-center border border-dashed border-[#bdbbb9] bg-white pt-0.5 pl-[10px] text-[12px] tracking-[-0.400px]">Add data fields here</div>
      <h2 className="mt-[14px] h-6 pl-[14px] text-[15.500px] font-semibold tracking-[-0.450px] text-[#484644]">Drill through</h2>
      <p className="mt-[11px] h-[18px] pl-[9px] text-[12px] tracking-[-0.300px]">Cross-report</p>
      <div className="mt-[11px] flex h-[18px] items-center gap-1 pl-[18px] text-[12px]">Off <Toggle /></div>
      <p className="mt-[17px] h-[18px] pl-[9px] text-[12px] tracking-[-0.300px]">Keep all filters</p>
      <div className="mt-[11px] flex h-[18px] items-center gap-1 pl-[18px] text-[12px]">On <Toggle on /></div>
      <div className="mt-[12px] ml-1 flex h-[26px] w-[170px] shrink-0 items-center border border-dashed border-[#bdbbb9] bg-white pl-2 text-[12px] tracking-[-0.450px] whitespace-nowrap">Add drill-through fields here</div>
    </Pane>
  );
}

function FieldsPane() {
  return (
    <Pane title="Fields">
      <div className="ml-1 flex h-[27px] w-[172px] shrink-0 items-center gap-2 rounded-sm border border-[#605e5c] bg-white pl-[7px] text-[13px] tracking-[-0.300px] text-[#605e5c]">
        <svg width="14" height="14" viewBox="0 0 14 14" fill="none" stroke="#323130"><circle cx="8.500" cy="5.500" r="4.800" /><path d="M5 9L0.500 13.500" /></svg>
        Search
      </div>
      <div className="mt-1.5 border-t border-[#dddbd9] pt-[11px]">
        {["airports_perfilado", "Cobertura de Aerea de ...", "flights_perfilado"].map((t) => (
          <div key={t} className="flex h-6 items-center gap-1 pl-2 text-[12px] tracking-[-0.350px] whitespace-nowrap">
            <Chev dir="right" c="#8a8886" sw={1} size={11} />
            <svg width="14" height="13" viewBox="0 0 14 13" fill="none" stroke="#323130"><path d="M0.500 0.500H13.500V12.500H0.500ZM0.500 3.500H13.500M0.500 6.500H13.500M0.500 9.500H13.500M5 0.500V12.500M9.500 0.500V12.500" /></svg>
            <span>{t}</span>
          </div>
        ))}
      </div>
    </Pane>
  );
}

function FilterStrip() {
  return (
    <aside className="flex w-[33px] shrink-0 flex-col items-center border-l border-[#a19f9d] bg-white pt-4">
      <Chev dir="left" c="#484644" size={12} sw={1.200} />
      <div className="mt-[35px]"><Funnel /></div>
      <span className="mt-[11px] text-[13.500px] leading-4 font-semibold tracking-[-0.200px] text-[#252423] [writing-mode:vertical-rl]">Filters</span>
    </aside>
  );
}

/* ---------- task bar ---------- */

function TaskSlot({ w = "w-11", dot, children }: Kids & { w?: string; dot?: boolean }) {
  return (
    <div className={`flex h-12 shrink-0 flex-col items-center ${w}`}>
      <div className="mt-[11px] flex h-[27px] items-center">{children}</div>
      {dot && <div className="mt-0.5 h-[3px] w-1.5 rounded-full bg-[#8f93a8]" />}
    </div>
  );
}
const Svg24 = ({ children }: Kids) => <svg width="24" height="24" viewBox="0 0 24 24" fill="none">{children}</svg>;

function TaskBar() {
  return (
    <div className="flex h-12 w-full shrink-0 bg-[linear-gradient(90deg,#1b222b_0%,#1b222b_14%,#142350_20%,#111d66_48%,#18224a_56%,#12225e_64%,#1a2340_72%,#1c222c_82%,#1b222b_100%)] pl-[266px]">
      <TaskSlot><Svg24><path d="M0 0H11.500V11.500H0ZM12.500 0H24V11.500H12.500ZM0 12.500H11.500V24H0ZM12.500 12.500H24V24H12.500Z" fill="#4cc2ff" /></Svg24></TaskSlot>
      <TaskSlot><Svg24><circle cx="14" cy="9.500" r="8" stroke="#e8eaf0" strokeWidth="2" fill="#3b4468" /><path d="M8.500 16L3 22" stroke="#e8eaf0" strokeWidth="2.500" /></Svg24></TaskSlot>
      <TaskSlot><Svg24><rect x="7" y="1" width="17" height="16" fill="#f3f3f3" /><rect x="1" y="7" width="17" height="16" fill="#737578" /><rect x="7" y="7" width="11" height="10" fill="#bdbdbd" /></Svg24></TaskSlot>
      <TaskSlot><Svg24><rect width="24" height="24" rx="2" fill="#0f6cbd" /><rect x="2" y="2" width="9" height="20" rx="1" fill="#fff" /><rect x="13" y="2" width="9" height="11" fill="#6fd6fb" /><rect x="13" y="15" width="9" height="7" fill="#28a8ea" /></Svg24></TaskSlot>
      <TaskSlot w="w-[46px]" dot>
        <svg width="28" height="26" viewBox="0 0 28 26"><rect x="6" y="5" width="18" height="19" fill="#28a8ea" /><path d="M6 14L15 20L24 14V24H6Z" fill="#1066b5" /><rect y="7" width="13" height="13" rx="1" fill="#0f6cbd" /><circle cx="6.500" cy="13.500" r="3.200" fill="none" stroke="#fff" strokeWidth="2" /><rect x="14" width="14" height="11" fill="#f0b478" /><path d="M14 0L21 7L28 0" fill="none" stroke="#fff" strokeWidth="1.2" /></svg>
      </TaskSlot>
      <TaskSlot w="w-[40px]"><Svg24><path d="M0 12L4 8L10 14L20 2L24 6L10 21Z" fill="#3a86e8" /><path d="M0 12L4 8L10 14L8 19Z" fill="#1c56b4" /></Svg24></TaskSlot>
      <TaskSlot w="w-[46px]" dot><Svg24><path d="M0 2H8L11 5H24V22H0Z" fill="#e3a008" /><rect y="6" width="24" height="17" rx="1" fill="#ffd35c" /><path d="M5 23V17H19V23Z" fill="#1f7fd6" /></Svg24></TaskSlot>
      <TaskSlot w="w-[42px]" dot>
        <svg width="28" height="28" viewBox="0 0 28 28"><circle cx="12" cy="16" r="11" fill="#34a853" /><path d="M12 16L2.500 10.500A11 11 0 0 1 21.500 10.500Z" fill="#ea4335" /><path d="M12 16L21.500 10.500A11 11 0 0 1 12 27Z" fill="#fbbc05" /><circle cx="12" cy="16" r="5.500" fill="#fff" /><circle cx="12" cy="16" r="4.300" fill="#4285f4" /><circle cx="20.500" cy="7.500" r="7" fill="#c2185b" /><text x="20.500" y="11" fontSize="9" fill="#fff" textAnchor="middle" fontFamily="Roboto">J</text></svg>
      </TaskSlot>
      <TaskSlot w="w-[46px]" dot><Svg24><circle cx="12" cy="12" r="11.500" fill="#fff" /><path d="M10 4V11M4.500 10H10" stroke="#36c5f0" strokeWidth="2.800" strokeLinecap="round" /><path d="M14 5V10M14 10H19.500" stroke="#2eb67d" strokeWidth="2.800" strokeLinecap="round" /><path d="M14 14V20M15 14.500H19.500" stroke="#ecb22e" strokeWidth="2.800" strokeLinecap="round" /><path d="M10 14.500V19.500M4.500 14.500H9" stroke="#e01e5a" strokeWidth="2.800" strokeLinecap="round" /></Svg24></TaskSlot>
      <TaskSlot w="w-[42px]" dot><Svg24><circle cx="12" cy="12" r="11.800" fill="#1ed760" /><path d="M5 8.500Q13 5.500 19.500 9.500M6 12.500Q12.500 10 18 13.500M7 16Q12.500 14 16.500 17" stroke="#111" strokeWidth="2.200" /></Svg24></TaskSlot>
      <TaskSlot dot><Svg24><path d="M6 0H24V23H6Z" fill="#ca64ea" /><path d="M17 6H24V12H17Z" fill="#ae4bd5" /><path d="M17 12H24V18H17Z" fill="#9332bf" /><path d="M6 18H24V23H6Z" fill="#7719aa" /><rect y="5" width="14" height="14" fill="#7719aa" /><path d="M4.500 15.500V8.500L9.500 15.500V8.500" stroke="#fff" strokeWidth="1.800" /></Svg24></TaskSlot>
      <TaskSlot><Svg24><rect width="24" height="24" rx="2" fill="#fff" /><path d="M12 2L20 6.500V16L12 22V19L4 16V6.500Z" fill="#0f2b46" /><path d="M8.500 7L15 11L9 14.500" stroke="#fff" strokeWidth="1.500" /></Svg24></TaskSlot>
      <TaskSlot><Svg24><circle cx="12" cy="12" r="11.800" fill="#e95420" /><circle cx="12.500" cy="12" r="5.500" stroke="#fff" strokeWidth="2" /><circle cx="4.800" cy="12" r="2" fill="#fff" /><circle cx="16.500" cy="5.500" r="2" fill="#fff" /><circle cx="16.500" cy="18.500" r="2" fill="#fff" /></Svg24></TaskSlot>
      <TaskSlot><Svg24><path d="M4 9Q12 -3 20 9Q12 4 4 9ZM4 14Q12 27 20 14Q12 19.500 4 14Z" fill="#f37726" /><circle cx="19" cy="2" r="1.400" fill="#767677" /><circle cx="6" cy="3" r="1" fill="#616262" /><circle cx="6" cy="22" r="1.400" fill="#767677" /></Svg24></TaskSlot>
      <TaskSlot><Svg24><circle cx="12" cy="12" r="11.800" fill="#75aadb" /><text x="12" y="17.500" fontSize="16" fill="#fff" textAnchor="middle" fontFamily="Liberation Serif">R</text></Svg24></TaskSlot>
      <TaskSlot><Svg24><path d="M17 0L24 3V21L17 24L6 14L2 17L0 16V8L2 7L6 10ZM17 7L10 12L17 17Z" fill="#1f9cf0" fillRule="evenodd" /><path d="M17 0L24 3V21L17 24Z" fill="#3bb1f8" /></Svg24></TaskSlot>
      <TaskSlot dot><Svg24><path d="M1 1L19 3L18 16L3 14Z" fill="#d9d9d9" /><path d="M3 3L17 4.500L16 14L4.500 12Z" fill="#1533c9" /><path d="M4 18L16 19L18 23L6 22Z" fill="#bdbdbd" /><circle cx="18" cy="18" r="5.500" fill="#e8efe8" /><path d="M15 20L18 17M17 19L21 15" stroke="#3c9a50" strokeWidth="1.500" /></Svg24></TaskSlot>
      <div className="mt-1 flex h-10 w-9 shrink-0 flex-col items-center rounded-[5px] border border-[#3a404c] bg-[#262d3c]">
        <svg width="20" height="24" viewBox="0 0 20 24" className="mt-1.5 shrink-0"><rect x="11" width="9" height="24" rx="1" fill="#dfa018" /><rect x="6" y="6" width="9" height="18" rx="1" fill="#f2c032" /><rect x="1" y="12" width="8" height="12" rx="1" fill="#f7dc6b" /></svg>
        <div className="mt-1 h-[3px] w-4 rounded-full bg-[#4cc2ff]" />
      </div>
      <TaskSlot w="w-[52px]"><Svg24><path d="M2 6L20 0V18L2 24Z" fill="#1a8f1f" /><path d="M2 9L7 8V18L2 19ZM8 8L13 7V17L8 18ZM14 7L20 5V15L14 17Z" fill="#8cf216" /></Svg24></TaskSlot>
    </div>
  );
}

/* ---------- right report ---------- */

const BigTitle = ({ cls, children }: Kids & { cls: string }) => <h3 className={`shrink-0 whitespace-nowrap font-[Roboto] text-[#252423] ${cls}`}>{children}</h3>;

function Slicer({ title, cls, ttl }: { title: string; cls: string; ttl: string }) {
  return (
    <div className={cls}>
      <div className="flex h-[33px] items-center justify-between pr-[3px] pl-1">
        <BigTitle cls={ttl}>{title}</BigTitle>
        <Chev c="#605e5c" size={15} sw={0.900} />
      </div>
      <div className="flex h-8 items-center justify-between border border-[#e6e6e6] pt-1 pr-[6px] pl-1.5 text-[15.500px] tracking-[-0.300px] text-[#605e5c]">
        All
        <Chev c="#605e5c" size={17} sw={0.700} />
      </div>
    </div>
  );
}

const COVER: [string, string, number, string][] = [
  ["Internacional", "7162", 45.5, "56.09%"],
  ["Regional", "3226", 21, "25.27%"],
  ["Nacional", "2380", 14.5, "18.64%"],
];

function CoverTable() {
  return (
    <div className="mt-[152px] ml-1.5 w-[267px] text-[15.500px] tracking-[-0.450px] text-[#252423]">
      <div className="flex h-[74px] border-b-2 border-[#5aaaf0] leading-[20px]">
        <span className="w-[115px] border-r border-[#dddbd9] pt-0.5 pl-1.5">tipo_cobertura</span>
        <span className="flex w-[60px] flex-col justify-between border-r border-[#dddbd9] pt-0.5 pb-1 pl-[7px]">
          vuelos
          <svg width="10" height="6" viewBox="0 0 10 6"><path d="M0 0H10L5 6Z" fill="#252423" /></svg>
        </span>
        <span className="pt-0.5 pl-1.5">%GT<br />porcentaje<br />_vuelos</span>
      </div>
      {COVER.map(([n, v, w, p], i) => (
        <div key={n} className={`flex h-[23.700px] items-center ${i === 1 ? "bg-[#ececec]" : ""}`}>
          <span className="h-full w-[115px] border-r border-[#dddbd9] pl-1.5">{n}</span>
          <span className="flex h-full w-[60px] items-center border-r border-[#dddbd9] pl-[7px]">
            <span className="relative flex h-5 w-[46px] items-center justify-end border-l border-dashed border-[#252423]">
              <span className="absolute inset-y-0 left-0 bg-[#118dff]" style={{ width: w }} />
              <span className="relative">{v}</span>
            </span>
          </span>
          <span className="flex flex-1 items-center justify-between pr-1.5 pl-1.5">
            <svg width="20" height="20" viewBox="0 0 20 20" fill="none" strokeWidth="2.2">
              <circle cx="10" cy="10" r="9" fill={i ? "#f67765" : "#9fdcaa"} stroke={i ? "#f04e23" : "#3f9b52"} strokeWidth="1.2" />
              {i ? <path d="M6 6L14 14M14 6L6 14" stroke="#fff" /> : <path d="M4.500 10L8.500 14L15.500 6.500" stroke="#3f9b52" strokeWidth="4" />}
              {!i && <path d="M4.500 10L8.500 14L15.500 6.500" stroke="#fff" />}
            </svg>
            {p}
          </span>
        </div>
      ))}
      <div className="flex h-[25px] items-center border-t-2 border-[#5aaaf0] font-bold">
        <span className="h-full w-[115px] border-r border-[#dddbd9] pl-1.5">Total</span>
        <span className="h-full w-[60px] border-r border-[#dddbd9] pr-1.5 text-right">12768</span>
        <span className="h-full flex-1 pr-1.5 text-right">100.00%</span>
      </div>
    </div>
  );
}

const BARX = [1617.1, 1651.4, 1682.5, 1717.1, 1750.3, 1784.6, 1817.8, 1852.5, 1887.1, 1920, 1954.2, 1987.8];
const CUTS = [
  [257, 384, 458, 620], [251, 362, 447, 601], [277, 375, 446, 623], [285, 307, 336, 536], [316, 379, 422, 520], [347, 380, 420, 581],
  [295, 317, 394, 554], [319, 419, 467, 693], [286, 363, 378, 611], [235, 317, 372, 552], [273, 358, 443, 588], [265, 354, 394, 520],
];
const TAGS: [string, number, number][] = [
  ["20.49%", 405, 319], ["14.03%", 460, 411], ["32.84%", 643, 396], ["26.56%", 405, 520], ["37.11%", 405, 682], ["15.88%", 737, 477], ["53.56%", 737, 687],
  ["18.27%", 833, 297], ["12.77%", 926, 360], ["26.03%", 926, 481], ["47.84%", 926, 706], ["13.56%", 1022, 268], ["25.11%", 1022, 774], ["12.62%", 1120, 328],
  ["37.91%", 1120, 498], ["48.14%", 1212, 706], ["13.95%", 1309, 394], ["14.46%", 1360, 325], ["20.60%", 1360, 454], ["53.47%", 1360, 580],
];

function StackedChart() {
  const fills = [PURPLE, PINK, PLUM, ORANGE, NAVY];
  return (
    <svg width="500" height="301" viewBox="1540 632 500 301" className="shrink-0">
      <Tx x={1546} y={651.500} s={15.500} t="tipo_cobertura" w={108} b={700} />
      {([["Aeródromo", NAVY, 1670.2, 79.5], ["Internacional", ORANGE, 1772.3, 89.5], ["Nacional", PLUM, 1884, 60]] as [string, string, number, number][]).map(([t, c, x, w]) => (
        <g key={t}>
          <circle cx={x} cy="651.300" r="5.900" fill={c} />
          <Tx x={x + 9.200} y={652} s={15.500} t={t} w={w} />
        </g>
      ))}
      <path d="M2011 645.500V656.500L2017 651Z" fill="#252423" />
      {[[679, "100%", 34], [780.7, "50%", 27], [882.3, "0%", 19]].map(([y, t, w]) => (
        <g key={t}>
          <path d={`M1614 ${y}H2014`} stroke="#c8c6c4" strokeDasharray="1.500 5" />
          <Tx x={1605} y={Number(y)} s={14} t={String(t)} a="end" w={Number(w)} />
        </g>
      ))}
      {BARX.map((x, i) => {
        const ys = [235, ...CUTS[i], 847];
        return fills.map((f, k) => <rect key={`${i}-${k}`} x={x} y={600 + ys[k] / 3} width="25" height={(ys[k + 1] - ys[k]) / 3} fill={f} stroke="#fff" strokeOpacity="0.35" strokeWidth="0.8" />);
      })}
      {TAGS.map(([t, cx, cy]) => {
        const x = 1500 + cx * 0.3571;
        const y = 600 + cy / 3;
        return (
          <g key={t}>
            <rect x={x - 32} y={y - 11} width="64" height="22" rx="4" fill="#3c3c3c" opacity="0.12" />
            <Tx x={x} y={y} s={13.500} t={t} a="middle" w={45} fill="#fff" />
          </g>
        );
      })}
      <Tx x={1555.500} y={780.500} s={14.500} t="%GT porcentaje_vuelos" a="middle" w={175} r fill="#252423" f={DIN} />
      {([["Jan 2010", 1630], ["Apr 2010", 1730], ["Jul 2010", 1831.2], ["Oct 2010", 1933.2]] as [string, number][]).map(([t, x]) => <Tx key={t} x={x} y={897} s={13.500} t={t} a="middle" w={t[0] === "A" || t[0] === "O" ? 56 : t[2] === "n" ? 54.500 : 50} />)}
      <Tx x={1814.600} y={918.500} s={15} t="fecha" a="middle" w={39.500} fill="#252423" f={DIN} />
    </svg>
  );
}

/* Map projection helpers: west and east halves are plotted on separate grids. */
const W = (x: number, y: number): Pt => [2030 + x * 0.3571, 70 + y * 0.3571];
const E = (x: number, y: number): Pt => [2560 + x * 0.463, 70 + y * 0.3571];
const line = (pts: Pt[]) => "M" + pts.map((p) => `${p[0].toFixed(1)} ${p[1].toFixed(1)}`).join("L");
const ws = (...n: number[]) => { const o: Pt[] = []; for (let i = 0; i < n.length; i += 2) o.push(W(n[i], n[i + 1])); return o; };
const es = (...n: number[]) => { const o: Pt[] = []; for (let i = 0; i < n.length; i += 2) o.push(E(n[i], n[i + 1])); return o; };
/* Adds coastline texture by displacing midpoints with a fixed pattern. */
function rough(pts: Pt[], amp: number): Pt[] {
  const out: Pt[] = [];
  let k = 0;
  pts.forEach((p, i) => {
    out.push(p);
    const q = pts[i + 1];
    if (!q) return;
    const len = Math.hypot(q[0] - p[0], q[1] - p[1]);
    const n = Math.min(12, Math.floor(len / 5));
    for (let j = 1; j < n; j++) {
      k++;
      const o = Math.sin(k * 2.7) * amp + Math.sin(k * 5.3) * amp * 0.6;
      out.push([p[0] + ((q[0] - p[0]) * j) / n - ((q[1] - p[1]) / len) * o, p[1] + ((q[1] - p[1]) * j) / n + ((q[0] - p[0]) / len) * o]);
    }
  });
  return out;
}

const LAND = rough([
  ...ws(180, 262, 260, 295, 340, 325, 410, 325, 450, 350, 490, 400, 540, 460, 590, 500, 560, 550, 600, 590, 640, 615, 652, 600, 690, 640, 740, 690, 755, 690, 740, 665, 790, 700, 830, 735, 860, 690, 905, 730, 960, 745, 955, 785, 1010, 785, 1050, 740, 1040, 700, 1065, 665, 1100, 670, 1150, 700, 1150, 750, 1190, 790, 1215, 850, 1225, 880, 1215, 950, 1225, 1020, 1240, 1050, 1190, 1110, 1150, 1150, 1110, 1190, 1100, 1240, 1050, 1265, 1015, 1285, 1020, 1340, 985, 1400, 960, 1412, 975, 1450, 960, 1490, 975, 1545),
  ...es(1075, 1545, 1075, 888, 980, 880, 950, 840, 905, 790, 860, 725, 800, 692, 762, 690, 762, 630, 710, 598, 655, 575, 665, 550, 640, 528, 560, 540, 520, 565, 480, 565, 440, 540, 400, 535, 332, 545, 320, 500, 290, 475, 250, 465, 215, 480, 165, 505, 130, 530, 112, 505, 110, 465, 155, 435, 158, 408, 130, 398, 95, 415, 50, 452, 10, 490),
  ...ws(1440, 495, 1400, 510, 1370, 540, 1345, 580, 1325, 625, 1290, 650, 1250, 690, 1235, 740, 1215, 740, 1200, 700, 1150, 655, 1100, 615, 1050, 615, 1010, 640, 960, 665, 920, 665, 870, 640, 850, 615, 830, 570, 790, 550, 760, 520, 740, 480, 720, 430, 742, 380, 762, 330, 768, 262),
], 1.1);

const BORDERS: Pt[][] = [
  es(150, 440, 105, 462, 70, 530, 60, 600, 40, 640, 68, 690, 85, 765, 120, 808, 215, 815, 235, 850, 265, 885, 340, 872, 378, 885, 355, 950, 360, 1040, 380, 1085, 355, 1130, 385, 1190, 425, 1260, 440, 1285, 490, 1285, 520, 1250, 575, 1230, 580, 1180, 615, 1165, 575, 1150, 565, 1060, 530, 1020, 640, 1065, 745, 1000, 770, 945, 805, 950, 810, 1010, 830, 1050, 810, 1100, 820, 1180, 875, 1250, 970, 1190, 1025, 1195, 1062, 1155),
  es(385, 1190, 350, 1190, 330, 1212, 237, 1212, 237, 1290, 275, 1292, 225, 1302, 225, 1350, 258, 1395, 258, 1460, 248, 1545),
  [...ws(1110, 1235, 1180, 1270, 1215, 1305, 1290, 1320, 1355, 1350, 1420, 1370, 1450, 1410, 1500, 1435, 1540, 1500), ...es(60, 1520, 130, 1505, 200, 1522, 250, 1520)],
  ws(1355, 1350, 1385, 1410, 1360, 1460, 1280, 1535),
  es(975, 880, 970, 960, 935, 965, 925, 1030),
  ws(450, 350, 490, 350, 515, 320, 515, 295, 560, 285, 600, 272),
  ws(595, 490, 640, 510, 680, 500, 720, 515, 750, 522),
  ws(805, 615, 820, 660, 800, 700, 802, 732),
  ws(1225, 690, 1235, 740, 1190, 770, 1185, 795),
];
const DASHED: Pt[][] = [es(810, 700, 820, 718, 770, 762, 790, 802, 745, 835, 730, 890, 760, 940), es(925, 1030, 960, 1090, 1000, 1190)];
const RIVERS: Pt[][] = [
  es(800, 692, 700, 690, 650, 715, 600, 728, 560, 750, 480, 755, 430, 770, 400, 800, 395, 860),
  es(258, 1340, 340, 1385, 420, 1370, 520, 1365, 600, 1385, 660, 1420, 710, 1450, 740, 1530),
  es(765, 1060, 770, 1120, 740, 1200, 715, 1290, 705, 1400), es(258, 1470, 340, 1470, 430, 1445, 560, 1440, 660, 1420),
  es(915, 830, 890, 900, 885, 1000, 900, 1060), es(760, 820, 820, 830, 870, 880), es(440, 950, 450, 1010, 410, 1030, 400, 1090),
  es(275, 1300, 330, 1330, 380, 1290), es(940, 1390, 990, 1440, 1050, 1500), es(960, 1290, 980, 1400, 960, 1480),
];
const ROADS: Pt[][] = [
  es(165, 520, 250, 480, 330, 560, 420, 560, 540, 580, 700, 610), es(330, 570, 380, 640, 370, 740, 350, 870), es(535, 580, 560, 650, 600, 725),
  es(0, 800, 40, 850, 60, 900, 30, 1000), ws(1360, 640, 1400, 800, 1350, 950, 1320, 1050, 1280, 1200, 1200, 1290, 1120, 1380, 1050, 1500),
  es(200, 590, 130, 700, 80, 760), es(600, 740, 690, 880, 760, 1000, 745, 1150, 770, 1300), ws(250, 280, 400, 310, 520, 400, 620, 480, 720, 590, 900, 690, 1060, 650),
];
const PATCHES: Pt[][] = [
  ws(580, 300, 650, 275, 700, 280, 650, 330, 590, 320), es(105, 1180, 180, 1170, 170, 1210, 130, 1220), es(60, 1240, 85, 1240, 80, 1310, 55, 1300),
  es(605, 690, 630, 650, 650, 690, 620, 705), es(560, 1190, 640, 1200, 650, 1250, 600, 1260, 560, 1230), es(665, 1115, 700, 1110, 695, 1140, 670, 1135),
  es(770, 1410, 830, 1420, 850, 1470, 790, 1460), es(985, 1390, 1020, 1410, 1035, 1480, 980, 1480), ws(1385, 1370, 1440, 1380, 1410, 1410, 1380, 1400),
  ws(1310, 1490, 1370, 1490, 1400, 1531, 1340, 1520), ws(1430, 720, 1480, 730, 1460, 780, 1430, 760), ws(1025, 1290, 1045, 1290, 1040, 1330, 1030, 1330),
  es(170, 770, 200, 765, 190, 800, 160, 800), ws(150, 1340, 170, 1330, 180, 1360, 200, 1395, 185, 1412, 160, 1408, 165, 1375), ws(228, 1384, 250, 1382, 245, 1390, 230, 1392), ws(205, 1358, 225, 1356, 222, 1366, 208, 1366),
];

type Bub = [number, number, number, string];
const WB: Bub[] = [
  [920, 326, 17, "#2a1a5e"], [893, 386, 15, "#4a35a0"], [1228, 700, 46, "#1f7fe8"], [1245, 783, 28, "#2f80f0"], [1292, 673, 21, "#1b2da0"], [1270, 752, 25, "#1b1f8c"], [1273, 762, 14, "#101a80"],
  [1343, 671, 23, "#f08030"], [1337, 674, 17, "#f08030"], [1366, 740, 24, "#f58a42"], [1395, 716, 18, "#f07018"], [1397, 716, 13, "#f07018"], [1322, 741, 15, "#8a5ad0"],
  [1417, 516, 30, "#5a1a9a"], [1381, 530, 25, "#6a44c8"], [1360, 551, 21, "#7a54d0"], [1401, 553, 14, "#5a1080"], [1457, 496, 24, "#10b8a0"], [1464, 510, 37, "#10c8a8"],
  [1473, 560, 24, "#20d0a8"], [1470, 556, 18, "#20d0a8"], [1470, 584, 14, "#10c098"], [1416, 598, 29, "#20d0b0"], [1449, 588, 24, "#20d0b0"], [1462, 624, 14, "#20d0a0"], [1478, 657, 16, "#20d0b0"],
  [1378, 635, 25, "#f03030"], [1356, 623, 20, "#f02020"], [1412, 640, 19, "#7a4ad0"], [1442, 643, 19, "#7a4ad0"],
  [1555, 467, 18, "#f06070"], [1538, 486, 17, "#f06070"], [1532, 552, 18, "#20b8e8"], [1518, 592, 37, "#18b0e8"], [1530, 610, 22, "#18b0e8"], [1514, 614, 14, "#1090d0"], [1492, 622, 15, "#18b0e8"], [1508, 645, 17, "#18b0e8"], [1500, 660, 15, "#18b0e8"],
  [1500, 695, 18, "#20b8f0"], [1503, 718, 21, "#20b8f0"], [1508, 751, 15, "#20b8e8"], [1524, 714, 19, "#2a58d0"],
  [1396, 821, 30, "#2a35a0"], [1421, 813, 27, "#2a35a0"], [1378, 835, 14, "#1b2590"], [1314, 865, 14, "#2030a0"], [1355, 908, 14, "#181c80"],
  [1498, 796, 45, "#9a6a18"], [1493, 780, 19, "#8a5a10"], [1490, 812, 21, "#8a5a10"], [1494, 790, 16, "#8a5a10"], [1458, 846, 22, "#9a6a18"], [1478, 862, 27, "#a07420"], [1530, 832, 15, "#a07420"], [1544, 814, 13, "#a07420"],
  [1441, 894, 14, "#d8a818"], [1543, 908, 30, "#d8b010"], [1230, 912, 19, "#3a8af0"], [1275, 914, 15, "#3a8af0"], [1222, 968, 29, "#2a80f0"], [1274, 961, 22, "#3a8af0"],
  [1409, 950, 21, "#20806a"], [1407, 996, 34, "#187060"], [1408, 1024, 30, "#187868"], [1392, 1010, 18, "#187868"], [1452, 1005, 46, "#206a70"], [1408, 985, 20, "#187868"], [1415, 988, 15, "#8a3ab8"], [1419, 1015, 15, "#7a3ab0"],
  [1470, 980, 34, "#c83ac0"], [1464, 989, 16, "#d8209a"], [1370, 1072, 27, "#20907a"], [1365, 1064, 20, "#189078"], [1405, 1088, 15, "#30a898"],
  [1305, 1038, 17, "#187018"], [1250, 1055, 15, "#2a8a2a"], [1288, 1048, 14, "#106a10"], [1288, 1078, 35, "#1a7a1a"], [1296, 1075, 27, "#147014"], [1181, 1150, 38, "#28a048"], [1278, 1158, 24, "#30b050"],
  [1376, 1120, 19, "#c8a010"], [1378, 1127, 18, "#c8a010"], [1117, 1207, 21, "#1a88d0"], [1227, 1239, 19, "#1a88d0"], [1199, 1280, 15, "#1a88d0"], [1318, 1204, 19, "#c8960a"], [1358, 1224, 39, "#d03848"], [1418, 1182, 23, "#d84858"], [1279, 1270, 15, "#f05a10"], [1287, 1306, 18, "#f05a10"],
];
const EB: Bub[] = [
  [80, 744, 31, "#2a50c8"], [118, 818, 16, "#e06838"], [123, 832, 15, "#e06838"], [124, 856, 13, "#e06838"], [146, 813, 14, "#e06838"], [182, 815, 35, "#f06838"], [178, 822, 26, "#e85820"], [183, 818, 19, "#e85820"], [170, 835, 18, "#e86030"], [214, 865, 16, "#e86838"],
  [274, 885, 15, "#1a3a68"], [297, 880, 15, "#1a3a68"], [373, 876, 30, "#1a3868"], [238, 1081, 22, "#f048c0"], [322, 1172, 17, "#f048c0"], [284, 1202, 22, "#f048b8"], [397, 1199, 45, "#f040c0"], [113, 1244, 19, "#9a80f0"],
  [212, 1248, 17, "#1a68a8"], [207, 1278, 19, "#1a68a8"], [257, 1262, 24, "#1a68a8"], [172, 1302, 24, "#1a68a8"], [87, 1389, 22, "#c83040"], [208, 1403, 19, "#1a68a8"], [40, 1476, 13, "#1878e0"],
  [237, 928, 14, "#142858"], [241, 940, 14, "#142858"], [228, 960, 15, "#101c48"], [204, 955, 14, "#142858"], [195, 948, 20, "#1a3a68"], [174, 990, 18, "#101c48"], [186, 1008, 14, "#142858"], [180, 985, 15, "#142858"],
  [155, 990, 18, "#38c048"], [133, 1018, 19, "#38c048"], [96, 1070, 20, "#30b848"], [97, 1082, 15, "#30b848"],
];
const TEALS: [number, number, number][] = [
  [140, 880, 20], [168, 880, 16], [188, 890, 16], [222, 880, 18], [125, 875, 15], [217, 905, 20], [205, 915, 18], [215, 893, 14], [120, 892, 20], [130, 905, 22], [108, 915, 22], [88, 935, 28], [78, 960, 26],
  [45, 975, 32], [60, 990, 26], [70, 975, 20], [100, 945, 22], [120, 935, 22], [140, 930, 22], [160, 925, 20], [178, 935, 20], [190, 925, 18], [150, 950, 20], [170, 950, 18], [110, 965, 22], [130, 960, 20], [95, 985, 22],
  [115, 985, 20], [85, 1005, 20], [100, 1010, 18], [130, 985, 18], [70, 940, 18], [150, 900, 18], [92, 918, 16], [118, 905, 14], [150, 935, 14], [128, 950, 14], [105, 935, 14], [165, 945, 14], [98, 1000, 14], [180, 960, 16], [195, 950, 14],
];
const GREENS: [number, number, number][] = [
  [20, 1040, 34], [45, 1020, 28], [60, 1010, 22], [10, 1060, 28], [35, 1050, 24], [55, 1040, 22], [0, 1030, 24], [28, 1025, 18], [40, 1035, 16], [50, 1055, 18], [32, 1078, 18], [65, 1025, 18], [5, 1045, 18], [20, 1060, 18],
];

const PLACES: [string, number, number, number, number][] = [
  ["Managua", 2197, 233, 61, 12.5], ["San José", 2263, 293.5, 48, 12.5], ["Panama City", 2367, 294.5, 80, 12.5], ["Barranquilla", 2498, 238.5, 76, 12.5], ["Cartagena", 2483, 280, 64, 12.5],
  ["Medellín", 2487.5, 394, 54, 12.5], ["Ibagué", 2472, 428.5, 44, 12.5], ["Cali", 2477, 469.5, 23, 12.5], ["Quito", 2418.500, 543.500, 35, 12.5], ["Bogotá", 2559, 411.500, 42, 12.5],
  ["Cúcuta", 2575.5, 323, 44, 12.5], ["Maracaibo", 2588, 273.5, 67, 12.5], ["Valencia", 2662, 263.5, 52, 12.5], ["Caracas", 2725, 278, 48, 12.5], ["Barcelona", 2811, 286, 64, 12.5],
  ["Ciudad", 2816, 342, 45, 12.5], ["Bolívar", 2816.5, 358.5, 44, 12.5], ["Georgetown", 2947.5, 351.5, 72, 12.5], ["Bridgetown", 2951, 191.5, 67, 12.5],
];
const COUNTRIES: [string, number, number, number, number][] = [
  ["EL SALVADOR", 2076, 179, 111, 15.5], ["NICARAGUA", 2217, 200, 101, 15.5], ["COSTA RICA", 2212, 264, 98, 15.5], ["PANAMA", 2336, 333, 76, 15.5], ["ECUADOR", 2349, 588, 105, 20], ["COLOMBIA", 2538, 447, 110, 18],
  ["VENEZUELA", 2690.5, 319.5, 117, 19.5], ["GUYANA", 2915.5, 392.5, 72, 16], ["SURIN", 2998, 456, 52, 16], ["CURACAO", 2662, 217, 50, 10], ["ST VINCENT", 2852.500, 178, 65, 10.5], ["AND THE", 2863.500, 190, 49, 10.5],
  ["GRENADINES", 2849.500, 202, 71, 10.5], ["GRENADA", 2856, 218, 54, 10.5], ["TRINIDAD AND", 2856.500, 262, 82, 11], ["TOBAGO", 2879.500, 274, 46, 11],
];
const CAPS: [number, number, boolean][] = [
  [2226.4, 219.5, true], [2285.6, 281, true], [2407.8, 307, true], [2435, 556, true], [2747.5, 264.5, true], [2944.5, 192, true], [2983.500, 365, true],
  [2619.7, 261, false], [2718.300, 274, false], [2808, 275.300, false], [2838, 330, false], [2398, 608, false], [2514.500, 380.500, false],
];

function BubbleMap() {
  const bub = (p: Pt, r: number, c: string, k: string) => <circle key={k} cx={p[0]} cy={p[1]} r={r * 0.3571} fill={c} fillOpacity="0.55" stroke={c} strokeWidth="1.2" />;
  return (
    <svg width="1007" height="450" viewBox="2043 167 1007 450" className="block shrink-0">
      <rect x="2043" y="167" width="1007" height="450" fill="#abc6f1" />
      <path d={line(LAND) + "Z"} fill="#f1efeb" stroke="#dcdff0" strokeWidth="1.2" strokeLinejoin="round" />
      <path d={line(es(10, 1080, 120, 1040, 200, 1000, 350, 980, 360, 1060, 380, 1090, 350, 1130, 380, 1190, 237, 1210, 237, 1300, 225, 1350, 258, 1400, 250, 1520, 60, 1520, 0, 1440, -60, 1430, -140, 1360, -60, 1240)) + "Z"} fill="#ece6e1" opacity="0.8" />
      <path d={line(es(540, 1030, 640, 1065, 745, 1000, 770, 945, 805, 950, 830, 1050, 815, 1180, 875, 1250, 870, 1340, 780, 1350, 690, 1400, 650, 1220, 580, 1170, 565, 1060)) + "Z"} fill="#ece6e1" opacity="0.8" />
      {PATCHES.map((p, i) => <path key={i} d={line(rough(p, 0.8)) + "Z"} fill="#d6e6bd" opacity="0.85" />)}
      <path d={line(es(118, 590, 145, 575, 165, 610, 160, 645, 130, 655, 108, 630)) + "Z"} fill="#abc6f1" />
      <path d={line(es(112, 500, 135, 530, 128, 590, 120, 590)) + "Z"} fill="#abc6f1" />
      <path d={line(ws(560, 395, 600, 420, 650, 430, 660, 465, 630, 475, 600, 450)) + "Z"} fill="#abc6f1" />
      <path d={line(es(640, 760, 660, 745, 655, 800, 640, 825, 625, 800)) + "Z"} fill="#b7cef3" />
      <path d={line(es(800, 1440, 850, 1450, 840, 1500, 810, 1490)) + "Z"} fill="#a9c4f2" />
      <path d={line(es(225, 385, 235, 450, 215, 455)) + "Z"} fill="#f1efeb" />
      <path d={line(es(690, 560, 735, 540, 730, 590, 700, 590)) + "Z"} fill="#f1efeb" />
      <g fill="none" strokeLinejoin="round">
        {ROADS.map((p, i) => <path key={i} d={line(rough(p, 0.7))} stroke="#eedfea" strokeWidth="1.8" />)}
        {RIVERS.map((p, i) => <path key={i} d={line(rough(p, 1.2))} stroke="#b4ccf3" strokeWidth="1.5" />)}
        {BORDERS.map((p, i) => <path key={i} d={line(rough(p, 1))} stroke="#8d8b8b" strokeWidth="1.4" />)}
        {DASHED.map((p, i) => <path key={i} d={line(p)} stroke="#8d8b8b" strokeWidth="1.400" strokeDasharray="7 5" />)}
        <path d={line(es(615, 1175, 650, 1220, 665, 1380, 690, 1440, 790, 1400, 800, 1320, 870, 1320, 875, 1250))} stroke="#b9aeb2" strokeDasharray="1.500 2.500" />
        <path d={line(es(870, 1320, 890, 1420, 960, 1470, 1000, 1500))} stroke="#b9aeb2" strokeDasharray="1.500 2.500" />
      </g>
      {PLACES.map(([t, x, y, w, s]) => <Tx key={t + x} x={x} y={y} s={s + 1} t={t} w={w} halo fill="#65656b" />)}
      {COUNTRIES.map(([t, x, y, w, s]) => <Tx key={t} x={x} y={y} s={s} t={t} w={w} halo b={700} fill="#1b1b1b" />)}
      <Tx x={2865.500} y={490.500} s={15} t="RORAIMA" w={61.500} halo fill="#8a7478" />
      {CAPS.map(([x, y, cap], i) => <circle key={i} cx={x} cy={y} r={cap ? 2.800 : 2.400} fill={cap ? "#e03020" : "#f2743a"} stroke="#fff" strokeWidth="1" />)}
      {TEALS.map(([x, y, r], i) => <circle key={i} cx={E(x, y)[0]} cy={E(x, y)[1]} r={r * 0.36} fill="#126a6e" fillOpacity="0.55" stroke="#0c5055" strokeWidth="1.1" />)}
      {WB.map(([x, y, r, c], i) => bub(W(x, y), r, c, `w${i}`))}
      {EB.map(([x, y, r, c], i) => bub(E(x, y), r, c, `e${i}`))}
      {GREENS.map(([x, y, r], i) => <circle key={i} cx={E(x, y)[0]} cy={E(x, y)[1]} r={r * 0.350} fill="#38c850" fillOpacity="0.5" stroke="#28a840" strokeWidth="1.1" />)}
      <rect x="2049" y="594" width="5.500" height="5.500" fill="#f25022" /><rect x="2055" y="594" width="5.500" height="5.500" fill="#7fba00" />
      <rect x="2049" y="600" width="5.500" height="5.500" fill="#00a4ef" /><rect x="2055" y="600" width="5.500" height="5.500" fill="#ffb900" />
      <Tx x={2063} y={600.500} s={9.500} t="Microsoft Bing" w={61} fill="#6b7078" />
      <Tx x={2760} y={603.500} s={10.500} t="© 2021 TomTom, © 2021 Microsoft Corporation" w={222} fill="#111" f="'Liberation Sans', sans-serif" />
      <Tx x={2991} y={603.500} s={10.500} t="Terms" w={29} fill="#1d3f9a" f="'Liberation Sans', sans-serif" />
      <path d="M2991 609.500H3020" stroke="#1d3f9a" />
    </svg>
  );
}

const LEG: [string, string, number, number][] = [
  ["Amazonas", BLUE, 2165, 71.5], ["Antioquia", NAVY, 2258.5, 67], ["Arauca", ORANGE, 2347.2, 47], ["Atlántico", PLUM, 2417.3, 61.5], ["Bogotá, D.C.", PINK, 2501.2, 84],
  ["Bolívar", PURPLE, 2607.7, 46.5], ["Boyacá", GOLD, 2676.7, 49], ["Caquetá", RED, 2747.4, 57.5], ["Casanare", TEAL, 2827, 62], ["Cauca", GREEN, 2911.2, 41.5], ["Cesar", SKY, 2975, 38],
];

function MapLegend() {
  return (
    <svg width="1010" height="28" viewBox="2043 137 1010 28" className="block shrink-0">
      <Tx x={2043.500} y={150.500} s={15.500} t="departamento" w={105.500} b={700} />
      {LEG.map(([t, c, x, w]) => (
        <g key={t}>
          <circle cx={x} cy="150" r="5.900" fill={c} />
          <Tx x={x + 9} y={150.700} s={15.500} t={t} w={w} />
        </g>
      ))}
      <path d="M3040.500 143.500V155.500L3047 149.500Z" fill="#252423" />
    </svg>
  );
}

const LX = [110, 238, 355, 482, 608, 735, 859, 987, 1115, 1238, 1367, 1491].map((v) => 2030 + v * 0.6633);
const LY = [341, 371, 349, 346, 340, 379, 376, 371, 357, 377, 377, 379].map((v) => 600 + v / 3);
const LV: [string, number, number][] = [
  ["2425", 121, 310], ["2089", 238, 424], ["2335", 354, 402], ["2360", 482, 400], ["2431", 606, 394], ["1998", 735, 432],
  ["2036", 859, 333], ["2087", 987, 328], ["2242", 1115, 316], ["2015", 1238, 432], ["2021", 1367, 333], ["2005", 1480, 432],
];
const LP: [string, number, number][] = [
  ["24.37%", 132, 549], ["26.05%", 238, 517], ["26.05%", 354, 517], ["25.21%", 482, 517], ["24.37%", 606, 517], ["24.37%", 735, 517],
  ["22.69%", 859, 517], ["26.05%", 987, 517], ["25.21%", 1115, 517], ["25.21%", 1238, 517], ["27.73%", 1367, 517], ["27.73%", 1469, 517],
];

function LineChart() {
  return (
    <svg width="1010" height="163" viewBox="2043 650 1010 163" className="block shrink-0">
      <circle cx="2049.800" cy="669.500" r="6" fill={BLUE} />
      <Tx x={2058} y={670.500} s={14.500} t="vuelos" w={40} />
      <circle cx="2110.700" cy="669.500" r="6" fill={NAVY} />
      <Tx x={2119} y={670.500} s={14.500} t="%GT Count of porcentaje_vuelos" w={203} />
      {[726.7, 787].map((y) => <path key={y} d={`M2092 ${y}H3031`} stroke="#c8c6c4" strokeDasharray="1.500 4" />)}
      <Tx x={2080} y={726.700} s={13.500} t="2K" a="end" w={16} />
      <Tx x={2080} y={787.500} s={13.500} t="0K" a="end" w={16} />
      <Tx x={2050} y={741} s={11.500} t="vuelos and %G..." a="middle" w={89} r fill="#252423" f={DIN} />
      {LP.map(([t, x, y], i) => <Tx key={i} x={2030 + x * 0.6633} y={600 + y / 3} s={13.500} t={t} a="middle" w={45} />)}
      <path d={line(LX.map((x, i) => [x, LY[i]] as Pt))} fill="none" stroke={BLUE} strokeWidth="3" />
      <path d="M2103 786H3020" stroke={NAVY} strokeWidth="3.200" />
      {LV.map(([t, x, y]) => <Tx key={t} x={2030 + x * 0.6633} y={600 + y / 3} s={13.500} t={t} a="middle" w={30} />)}
      {["Jan", "Mar", "May", "Jul", "Sep", "Nov"].map((m, i) => <Tx key={m} x={2104 + [0, 162, 329.500, 496, 666, 833.500][i]} y={800.500} s={13.500} t={`${m} 2010`} a="middle" w={m === "Jul" ? 51 : m === "Jan" ? 55 : 60} />)}
    </svg>
  );
}

function DateBox({ cls, children }: Kids & { cls: string }) {
  return <div className={`flex h-[31px] items-center border border-[#e1e1e1] pt-1 pl-2 text-[13.500px] tracking-[-0.500px] text-[#323130] ${cls}`}>{children}</div>;
}

function RightReport() {
  return (
    <main className="flex min-w-0 flex-1 flex-col bg-white pl-[130px]">
      <div className="flex h-[855px] w-[1520px] border-x-2 border-b-2 border-dotted border-[#484644]">
        <section className="flex w-[504px] flex-col">
          <div className="flex h-[70px] shrink-0">
            <Slicer title="tipo_cobertura" cls="ml-[11px] w-[192px]" ttl="tracking-[0.050px] text-[17px]" />
            <Slicer title="departamento" cls="ml-[49px] mt-[5px] w-[212px]" ttl="tracking-[0.250px] text-[17px]" />
          </div>
          <BigTitle cls="ml-1.5 flex h-12 items-center pt-1 text-[19px] tracking-[0.150px]">Vigencia Aeropuerto</BigTitle>
          <div className="ml-[15px] flex h-[31px] shrink-0 gap-[7px]">
            <DateBox cls="w-[87px]">2/12/2012</DateBox>
            <DateBox cls="w-[90px]">12/29/2013</DateBox>
          </div>
          <svg width="460" height="34" viewBox="1556 236.500 460 34" className="mt-[7px] ml-4 shrink-0">
            <path d="M1572 253.500H2010" stroke="#e6e6e6" strokeWidth="3.500" />
            <path d="M1572 253.500H1702" stroke="#605e5c" strokeWidth="3.500" />
            <circle cx="1572.600" cy="253.500" r="14.300" fill="#fff" stroke="#605e5c" strokeWidth="2" />
            <circle cx="1701.500" cy="253.500" r="14.300" fill="#fff" stroke="#605e5c" strokeWidth="2" />
          </svg>
          <div className="flex h-[333px] shrink-0">
            <CoverTable />
            <div className="mt-[147px] ml-2 flex w-[180px] flex-col">
              <BigTitle cls="h-[42px] leading-[17px] text-[18.500px] tracking-[0.300px]">vuelos</BigTitle>
              <svg width="160" height="120" viewBox="1821 460 160 120" className="shrink-0">
                <circle cx="1919.800" cy="519.300" r="51" fill="none" stroke={BLUE} strokeWidth="8.400" />
                <rect x="1837.500" y="498" width="62.500" height="43" rx="4" fill="#3b3a39" opacity="0.600" />
                <Tx x={1869} y={511} s={13.500} t="100.00%" a="middle" w={52} fill="#fff" />
                <Tx x={1869} y={528} s={13.500} t="(100%)" a="middle" w={42} fill="#fff" />
              </svg>
            </div>
          </div>
          <BigTitle cls="ml-1.5 h-[28px] leading-[28px] text-[18.500px] tracking-[0.700px]">vuelos en el tiempo</BigTitle>
          <StackedChart />
        </section>
        <section className="flex w-[1010px] flex-col">
          <BigTitle cls="h-[56px] pt-[2px] leading-[21.500px] text-[18.500px] tracking-[0.550px]">
            vuelos, distancia, D_Aerodromo, D_Internacional, D_Nacional and D_Regional by departamento, latitud and<br />longitud
          </BigTitle>
          <MapLegend />
          <div className="mt-0.5"><BubbleMap /></div>
          <BigTitle cls="h-[33px] leading-[38px] text-[18.500px] tracking-[0.900px]">Vuelos por mes</BigTitle>
          <LineChart />
          <BigTitle cls="mt-[28px] ml-2.5 h-[36px] leading-[25px] text-[18.500px] tracking-[0.800px]">Periodo de tiempo</BigTitle>
          <div className="ml-[18px] flex gap-[7px]">
            <DateBox cls="w-[88px]">1/1/2010</DateBox>
            <DateBox cls="w-[88px]">12/1/2016</DateBox>
          </div>
        </section>
      </div>
    </main>
  );
}

function ClosedPane({ name }: { name: string }) {
  return (
    <aside className="flex w-[33px] shrink-0 flex-col items-center border-l border-[#d8d6d4] bg-[#f3f2f1] pt-4">
      <Chev dir="left" c="#605e5c" size={12} sw={1.100} />
      <span className="mt-[33px] text-[14px] leading-4 font-semibold tracking-[-0.250px] text-[#484644] [writing-mode:vertical-rl]">{name}</span>
    </aside>
  );
}

/* ---------- highlighter annotations ---------- */

const LOOPS: Pt[][] = [
  [[115, 421], [152, 425], [295, 425], [321, 413], [331, 383], [335, 333], [334, 283], [326, 247], [312, 207], [299, 163], [286, 137], [259, 115], [223, 105.5], [78, 105.5], [45, 122], [28, 160], [22, 207], [22, 300], [32, 343], [50, 387], [76, 412], [116, 427], [152, 428.5]],
  [[455, 385], [429, 353], [404, 320], [402, 277], [413, 233], [419, 207], [424, 160], [440, 137], [473, 113], [509, 95], [547, 87], [700, 86.5], [858, 86.5], [899, 98], [944, 113], [962, 140], [974, 167], [976, 200], [974.5, 240], [966, 263], [948, 287], [926, 320], [894, 363], [872, 393], [854, 406], [808, 411.7], [700, 411.7], [603, 411], [536, 403], [455, 387]],
  [[1552, 585], [1541, 583], [1541, 567], [1546, 540], [1552, 493], [1560, 460], [1579, 435], [1607, 418], [1638, 409.5], [1720, 409.5], [1762, 415], [1800, 427], [1825, 438], [1841, 463], [1853, 497], [1865, 527], [1875, 550], [1877, 577], [1875, 590], [1865, 603], [1844, 609.5], [1689, 610], [1638, 609], [1596, 605], [1569, 598], [1552, 594]],
  [...ws(222, 1288, 300, 1235, 380, 1190, 440, 1130, 510, 1020, 560, 900, 620, 740, 680, 590, 720, 480, 750, 390, 775, 330, 810, 304, 870, 305, 950, 318, 1040, 321, 1568, 321), ...es(400, 321, 450, 330, 560, 370, 650, 405, 780, 465, 840, 510, 880, 590, 920, 690, 940, 770, 942, 900, 930, 1000, 900, 1110, 850, 1240, 800, 1320, 740, 1385, 680, 1440, 620, 1500), [2819, 629], [2798, 638], [2773, 641.3], [2461, 642], [2401, 636.7], [2351, 624], ...ws(780, 1515, 650, 1485, 540, 1445, 440, 1398, 360, 1345, 310, 1290, 250, 1250)],
];

function Highlights() {
  return (
    <svg width="3286" height="999" viewBox="0 0 3286 999" className="pointer-events-none absolute inset-0 mix-blend-darken">
      <g transform="scale(0.35 1)" fill="none" stroke="#26e600" strokeWidth="12.5" strokeLinejoin="round">
        {LOOPS.map((l, i) => <path key={i} d={smooth(l, 0.35)} />)}
      </g>
      <path d="M111 593H306V605H111ZM1634.600 907.300H2024V919.500H1634.600Z" fill="#26e600" />
    </svg>
  );
}

export default function App() {
  return (
    <div className="relative isolate flex h-[999px] w-[3286px] overflow-hidden bg-white font-['Open_Sans']">
      <div className="flex w-[1366px] shrink-0 flex-col">
        <div className="h-1.5 shrink-0 bg-[#3b3a39] pl-[462px]"><div className="h-px w-[464px] bg-[#c9cfca]" /></div>
        <Ribbon />
        <div className="flex h-[584px] shrink-0">
          <NavRail />
          <div className="flex w-[963px] flex-col">
            <div className="flex h-[549px]">
              <LeftReport />
              <FilterStrip />
            </div>
            <PageTabs close />
          </div>
          <VizPane />
          <FieldsPane />
        </div>
        <StatusBar h="h-6" />
        <TaskBar />
      </div>
      <div className="flex w-[1920px] shrink-0 flex-col">
        <div className="h-[3px] shrink-0 bg-[#3b3a39]" />
        <Ribbon wide />
        <div className="flex h-[896px] shrink-0">
          <NavRail />
          <div className="flex w-[1813px] flex-col">
            <div className="flex h-[861px]">
              <RightReport />
              <FilterStrip />
            </div>
            <PageTabs />
          </div>
          <ClosedPane name="Visualizations" />
          <ClosedPane name="Fields" />
        </div>
        <StatusBar h="h-[22px]" />
      </div>
      <Highlights />
    </div>
  );
}
